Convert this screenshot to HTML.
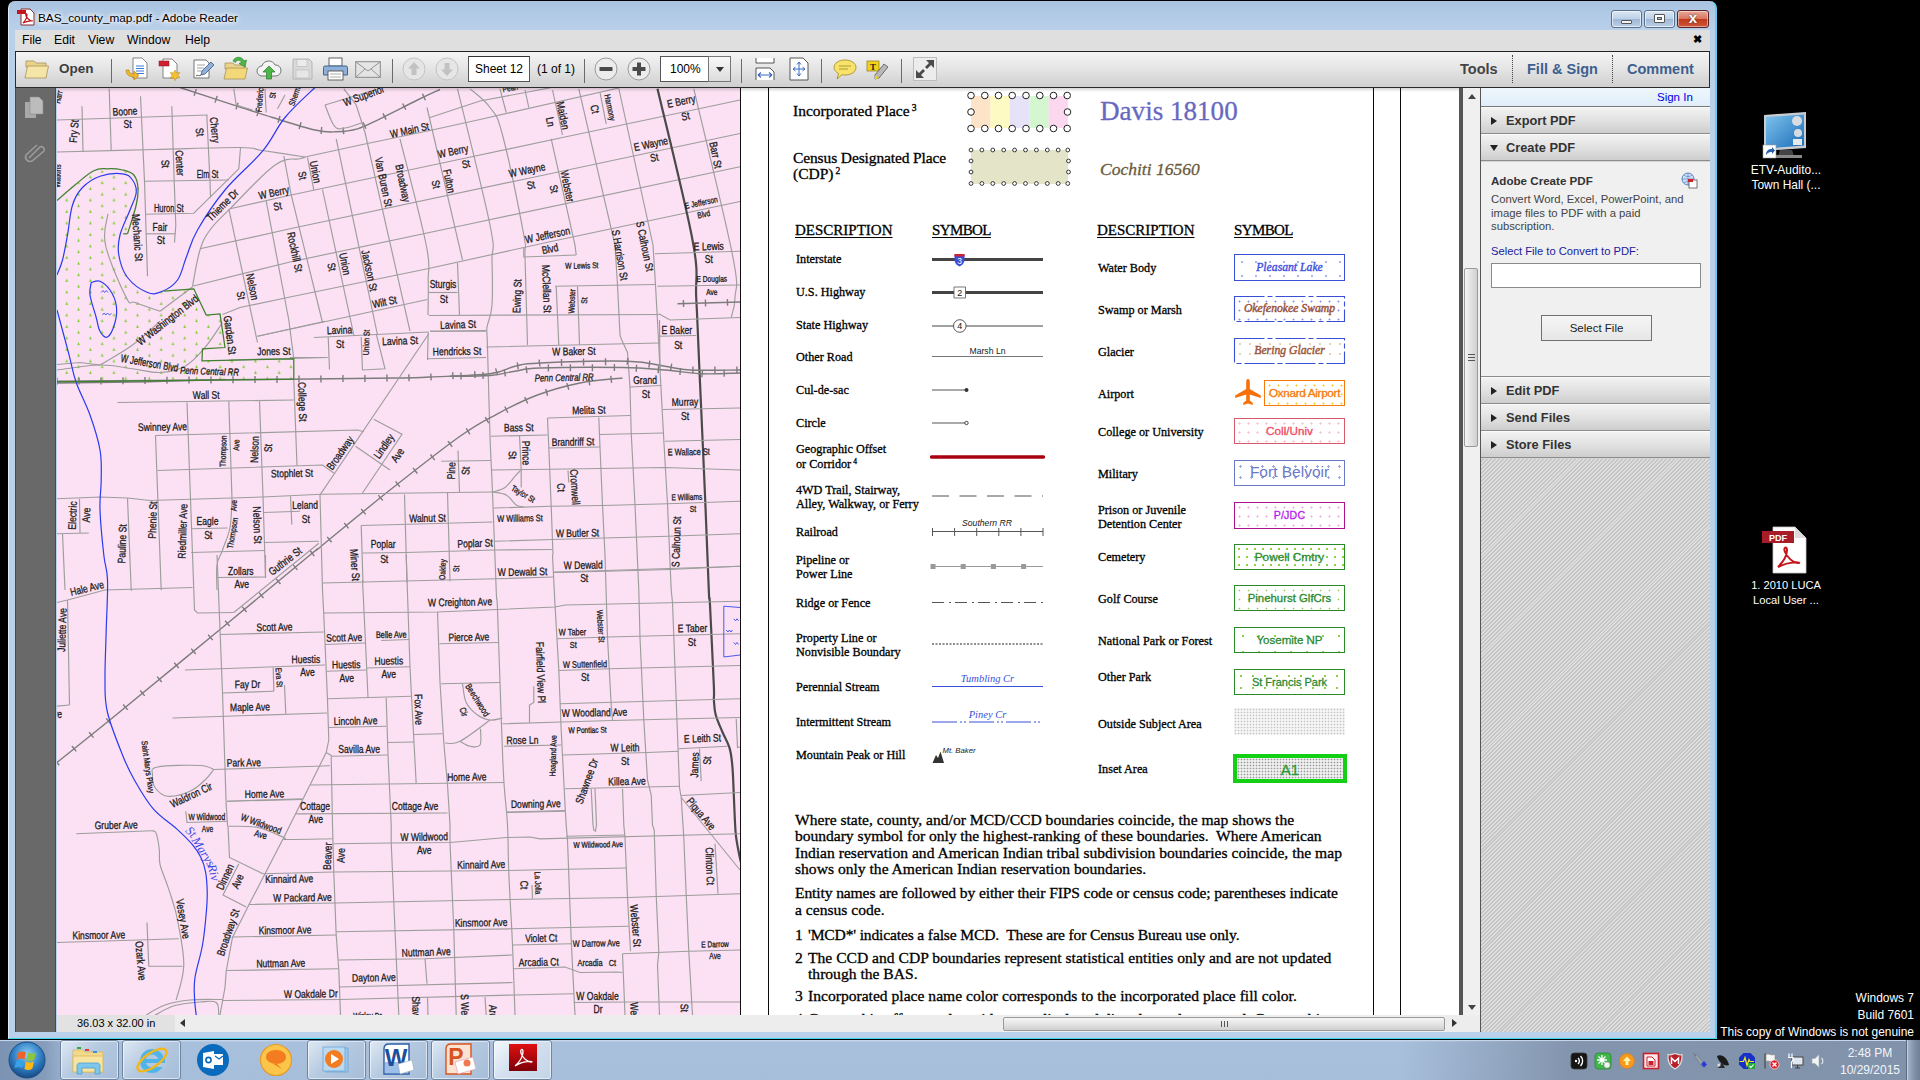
<!DOCTYPE html>
<html lang="en">
<head>
<meta charset="utf-8">
<title>BAS_county_map.pdf - Adobe Reader</title>
<style>
*{box-sizing:border-box;margin:0;padding:0}
html,body{width:1920px;height:1080px;overflow:hidden;background:#000;font-family:"Liberation Sans",sans-serif;}
.abs{position:absolute}
#win{position:absolute;left:8px;top:1px;width:1709px;height:1038px;border-radius:7px 7px 0 0;background:linear-gradient(#a9c3e1 0,#b9d0ea 28px,#b9d1ea 100%);border-left:1px solid #dfeaf6;border-right:2px solid #5fd0f0;border-bottom:1px solid #3fd6f0;}
#title{position:absolute;left:37px;top:10px;font-size:11.8px;text-shadow:0 0 6px #fff,0 0 6px #fff,0 0 4px #fff;color:#000;letter-spacing:0px;white-space:nowrap}
#menubar{position:absolute;left:15px;top:30px;width:1695px;height:21px;background:#dfdfdf}
#menubar span{position:absolute;top:3px;font-size:12.2px;color:#000}
#toolbar{position:absolute;left:15px;top:51px;width:1695px;height:37px;border:1px solid #2b2b2b;border-top:1px solid #222;background:linear-gradient(#f4f4f4,#e4e4e4 50%,#cfcfcf);}
.tsep{position:absolute;top:7px;width:1px;height:24px;background:#6a6a6a}
.tb{position:absolute;font-weight:bold;color:#3e3e3e;font-size:14.5px}
#leftpane{position:absolute;left:15px;top:88px;width:41px;height:944px;background:#696969;border-left:1px solid #4a4a4a;border-right:1px solid #4a4a4a}
#doc{position:absolute;left:57px;top:88px;width:1402px;height:927px;background:#fff;overflow:hidden}
#hbar{position:absolute;left:57px;top:1015px;width:1423px;height:17px;background:#ededed}
#vbar{position:absolute;left:1459px;top:88px;width:21px;height:927px;background:#f0f0f0;border-left:4px solid #555}
#panel{position:absolute;left:1480px;top:88px;width:230px;height:944px;border-left:1px solid #555;background:#d4d4d4}
.ph{position:absolute;left:0;width:229px;height:27px;background:linear-gradient(#f2f2f2,#dedede 60%,#cdcdcd);border-top:1px solid #fafafa;border-bottom:1px solid #8c8c8c;font-weight:bold;font-size:12.8px;color:#333;padding:5px 0 0 25px}
.ph i{position:absolute;left:10px;top:9px;width:0;height:0;border:4px solid transparent;border-left:6px solid #222;border-right:0}
.ph i.dn{left:9px;top:10px;border:4px solid transparent;border-top:6px solid #222;border-bottom:0}
#taskbar{position:absolute;left:0;top:1039px;width:1920px;height:41px;background:linear-gradient(#05070a 0,#05070a 1px,#c6d7ea 1px,#c2d4e8 2px,#a8c0dc 3px,#a7bedb 100%);}
.tbtn{position:absolute;top:1px;height:40px;width:59px;border:1px solid #6f86a3;border-radius:3px;background:linear-gradient(135deg,#dfe9f4,#b5c9e0 45%,#a7bdd8);box-shadow:inset 0 0 0 1px rgba(255,255,255,.55)}
.dtxt{position:absolute;color:#fff;font-size:11.95px;white-space:nowrap}
</style>
</head>
<body>
<div id="win">
 <svg class="abs" style="left:7px;top:7px" width="20" height="18" viewBox="0 0 20 18"><path d="M5 1h9l4 4v12H5z" fill="#fff" stroke="#8a2a2a" stroke-width="1"/><rect x="1" y="2" width="9" height="4" fill="#c4161c"/><path d="M7 15c3-3 4-6 4-8s-2-1-1 1 4 5 6 5-3-1-9 2z" fill="none" stroke="#c4161c" stroke-width="1.2"/></svg>
 <div id="title" style="left:29px">BAS_county_map.pdf - Adobe Reader</div>
 <div class="abs" style="left:1602px;top:9px;width:31px;height:18px;border:1px solid #5a6f8a;border-radius:3px;background:linear-gradient(#dbe7f5,#bdd1e8 48%,#9fb8d6 52%,#bcd0e7);box-shadow:inset 0 0 0 1px rgba(255,255,255,.6)"><div class="abs" style="left:9px;top:9px;width:11px;height:4px;background:#f4f4f4;border:1px solid #555;border-radius:1px"></div></div>
 <div class="abs" style="left:1635px;top:9px;width:31px;height:18px;border:1px solid #5a6f8a;border-radius:3px;background:linear-gradient(#dbe7f5,#bdd1e8 48%,#9fb8d6 52%,#bcd0e7);box-shadow:inset 0 0 0 1px rgba(255,255,255,.6)"><div class="abs" style="left:9px;top:3px;width:11px;height:9px;background:#fff;border:1px solid #555;border-radius:1px"><div style="margin:2px 0 0 2px;width:5px;height:3px;border:1px solid #555;background:#a9bdd6"></div></div></div>
 <div class="abs" style="left:1668px;top:9px;width:32px;height:18px;border:1px solid #5b2226;border-radius:3px;background:linear-gradient(#e9a99a,#d9775f 48%,#c2391d 52%,#d0573a);box-shadow:inset 0 0 0 1px rgba(255,255,255,.45);color:#fff;font-weight:bold;font-size:15px;line-height:14px;text-align:center;text-shadow:0 0 2px #333">x</div>
</div>
<div id="menubar">
 <span style="left:7px">File</span><span style="left:39px">Edit</span><span style="left:73px">View</span><span style="left:112px">Window</span><span style="left:170px">Help</span>
 <span style="left:1678px;top:3px;font-weight:bold;font-size:11px">&#x2716;</span>
</div>
<div id="toolbar">
<svg class="abs" style="left:8px;top:5px" width="26" height="24" viewBox="0 0 26 24"><path d="M2 4h8l2 2h10v4H2z" fill="#e9d38a" stroke="#a8935a" stroke-width=".8"/><path d="M1 21 3.500 9h21L22 21z" fill="#f5e6a8" stroke="#a8935a" stroke-width=".8"/></svg>
<div class="tb" style="left:43px;top:9px;font-size:13.5px">Open</div>
<div class="tsep" style="left:95px"></div>
<svg class="abs" style="left:109px;top:5px" width="24" height="24" viewBox="0 0 24 24"><path d="M8 1h9l5 5v15H8z" fill="#fff" stroke="#777" stroke-width=".9"/><path d="M11 9h8M11 11.500h8M11 14h8M11 16.500h8" stroke="#3a7ad8" stroke-width="1"/><path d="M1 13c0 5 4 7 8 7v3l5-4.500-5-4.500v3c-3 0-5-1-5-4z" fill="#f0b82c" stroke="#a87a1a" stroke-width=".6"/></svg>
<svg class="abs" style="left:142px;top:5px" width="24" height="24" viewBox="0 0 24 24"><path d="M5 2h9l5 5v14H5z" fill="#fff" stroke="#777" stroke-width=".9"/><rect x="1" y="4" width="10" height="5" fill="#d02030" stroke="#8a1420" stroke-width=".5"/><path d="M17 13l1.500 3 3.300-.5-1.800 2.800 1.800 2.800-3.300-.4-1.500 3-1.500-3-3.300.4 1.800-2.800-1.800-2.800 3.300.5z" fill="#f2c230" stroke="#b8861a" stroke-width=".5"/></svg>
<svg class="abs" style="left:175px;top:5px" width="24" height="24" viewBox="0 0 24 24"><path d="M3 3h12l3 3v15H3z" fill="#fff" stroke="#666" stroke-width=".9"/><path d="M6 8h8M6 11h7M6 14h5" stroke="#999" stroke-width=".9"/><path d="M10 18l1-4 9-9 3 3-9 9z" fill="#8fb0d8" stroke="#3a5a8a" stroke-width=".8"/><path d="M5 19c2-2 3 1 5-1" stroke="#333" stroke-width=".8" fill="none"/></svg>
<svg class="abs" style="left:207px;top:3px" width="27" height="26" viewBox="0 0 27 26"><path d="M2 8h8l2 2h10v4H2z" fill="#e9d38a" stroke="#a8935a" stroke-width=".8"/><path d="M1 24 3.500 13h21L22 24z" fill="#f2d878" stroke="#a8935a" stroke-width=".8"/><path d="M10 6c2-5 9-5 11 0l2.500-1-1.500 7-6-3.500 2.500-1c-1-3-5-3-6 0z" fill="#4cb648" stroke="#2a7a28" stroke-width=".6"/></svg>
<svg class="abs" style="left:240px;top:6px" width="26" height="23" viewBox="0 0 26 23"><path d="M6 18a5 5 0 0 1 0-10 7 7 0 0 1 13-1 5.500 5.500 0 0 1 1 11z" fill="#f4f4f4" stroke="#777" stroke-width="1"/><path d="M13 8l6 6h-3.500v7h-5v-7H7z" fill="#4cb648" stroke="#2a7a28" stroke-width=".7"/></svg>
<svg class="abs" style="left:276px;top:6px" width="21" height="22" viewBox="0 0 21 22"><path d="M1 1h16l3 3v17H1z" fill="#d9d9d9" stroke="#b0b0b0" stroke-width=".9"/><rect x="5" y="1.500" width="10" height="7" fill="#ececec" stroke="#b8b8b8" stroke-width=".6"/><rect x="4" y="12" width="13" height="8" fill="#e6e6e6" stroke="#b8b8b8" stroke-width=".6"/></svg>
<svg class="abs" style="left:307px;top:5px" width="25" height="24" viewBox="0 0 25 24"><rect x="6" y="1" width="13" height="8" fill="#fff" stroke="#555" stroke-width=".9"/><path d="M2 9h21a1.500 1.500 0 0 1 1.500 1.500V18H.500v-7.500A1.500 1.500 0 0 1 2 9z" fill="#8fb0d8" stroke="#3a5a8a" stroke-width=".9"/><rect x="5" y="14" width="15" height="9" fill="#fff" stroke="#555" stroke-width=".9"/><path d="M7 17h11M7 20h11" stroke="#999" stroke-width=".8"/></svg>
<svg class="abs" style="left:339px;top:9px" width="26" height="17" viewBox="0 0 26 17"><rect x=".7" y=".7" width="24.600" height="15.600" fill="#e4e4e4" stroke="#8a8a8a" stroke-width="1"/><path d="M1 1l12 9 12-9M1 16l9-8M25 16l-9-8" fill="none" stroke="#8a8a8a" stroke-width=".9"/></svg>
<div class="tsep" style="left:376px"></div>
<svg class="abs" style="left:386px;top:5px" width="24" height="24" viewBox="0 0 24 24"><circle cx="12" cy="12" r="11" fill="#e6e6e6" stroke="#c4c4c4" stroke-width="1"/><path d="M12 5l6 6.500h-3.500V18h-5v-6.500H6z" fill="#c2c2c2" transform="rotate(0 12 12)"/></svg>
<svg class="abs" style="left:419px;top:5px" width="24" height="24" viewBox="0 0 24 24"><circle cx="12" cy="12" r="11" fill="#e6e6e6" stroke="#c4c4c4" stroke-width="1"/><path d="M12 5l6 6.500h-3.500V18h-5v-6.500H6z" fill="#c2c2c2" transform="rotate(180 12 12)"/></svg>
<div class="abs" style="left:452px;top:4px;width:62px;height:26px;background:#fff;border:1px solid #555;border-top-color:#333;font-size:12px;line-height:24px;text-align:center;white-space:nowrap">Sheet 12</div>
<div class="abs" style="left:521px;top:10px;font-size:12px;white-space:nowrap">(1 of 1)</div>
<div class="tsep" style="left:568px"></div>
<svg class="abs" style="left:578px;top:5px" width="24" height="24" viewBox="0 0 24 24"><circle cx="12" cy="12" r="11" fill="#ececec" stroke="#9a9a9a" stroke-width="1"/><rect x="5.500" y="10" width="13" height="4" rx=".5" fill="#4a4a4a"/></svg>
<svg class="abs" style="left:611px;top:5px" width="24" height="24" viewBox="0 0 24 24"><circle cx="12" cy="12" r="11" fill="#ececec" stroke="#9a9a9a" stroke-width="1"/><rect x="5.500" y="10" width="13" height="4" rx=".5" fill="#4a4a4a"/><rect x="10" y="5.500" width="4" height="13" rx=".5" fill="#4a4a4a"/></svg>
<div class="abs" style="left:644px;top:4px;width:71px;height:26px;background:#fff;border:1px solid #555;font-size:12px;line-height:24px;padding-left:9px">100%<div class="abs" style="left:47px;top:-1px;width:23px;height:26px;border:1px solid #777;background:linear-gradient(#f8f8f8,#dcdcdc)"><div style="margin:10px 0 0 7px;width:0;height:0;border:4px solid transparent;border-top:5px solid #333"></div></div></div>
<div class="tsep" style="left:725px"></div>
<svg class="abs" style="left:738px;top:5px" width="22" height="24" viewBox="0 0 22 24"><path d="M2 1v5h18V1" fill="#fff" stroke="#555" stroke-width="1"/><path d="M2 23V11h14l4 4v8" fill="#fff" stroke="#555" stroke-width="1"/><path d="M4 18h14M4 18l3-2.500M4 18l3 2.500M18 18l-3-2.500M18 18l-3 2.500" stroke="#3a6ac0" stroke-width="1.100" fill="none"/></svg>
<svg class="abs" style="left:772px;top:5px" width="22" height="24" viewBox="0 0 22 24"><path d="M2 1h13l5 5v17H2z" fill="#fff" stroke="#555" stroke-width="1"/><path d="M11 5v14M5 12h12M11 5l-2 2.500M11 5l2 2.500M11 19l-2-2.500M11 19l2-2.500M5 12l2.500-2M5 12l2.500 2M17 12l-2.500-2M17 12l-2.500 2" stroke="#3a6ac0" stroke-width="1" fill="none"/></svg>
<div class="tsep" style="left:805px"></div>
<svg class="abs" style="left:817px;top:7px" width="24" height="22" viewBox="0 0 24 22"><path d="M12 1c6 0 11 3 11 7.500S18 16 12 16c-1 0-2 0-3-.3L4 20l1.500-5.500C3 13 1 11 1 8.500 1 4 6 1 12 1z" fill="#f7e26a" stroke="#a8922a" stroke-width=".9"/><path d="M6 7h12M6 10h9" stroke="#a8922a" stroke-width=".9"/></svg>
<svg class="abs" style="left:850px;top:6px" width="25" height="23" viewBox="0 0 25 23"><rect x="1" y="3" width="12" height="10" fill="#f2d21a" stroke="#8a7a1a" stroke-width=".7"/><text x="7" y="11.500" font-family="Liberation Serif, serif" font-weight="bold" font-size="9" text-anchor="middle" fill="#222">T</text><path d="M9 17l9-11 4 3-9 11-4 1z" fill="#b8b8b8" stroke="#555" stroke-width=".8"/><path d="M9 17l4 3-4 1.500z" fill="#f2d21a"/></svg>
<div class="tsep" style="left:885px"></div>
<svg class="abs" style="left:897px;top:5px" width="24" height="24" viewBox="0 0 24 24"><rect x=".5" y=".5" width="23" height="23" fill="#ececec" stroke="#bdbdbd"/><path d="M21 3v8l-3-3-4 4-2-2 4-4-3-3zM3 21v-8l3 3 4-4 2 2-4 4 3 3z" fill="#4a4a4a"/></svg>
<div class="tb" style="left:1444px;top:9px;font-size:14.5px;color:#444">Tools</div>
<div class="abs" style="left:1496px;top:3px;width:0;height:28px;border-left:1px dotted #444"></div>
<div class="tb" style="left:1511px;top:9px;font-size:14.5px;color:#3c5f8e">Fill &amp; Sign</div>
<div class="abs" style="left:1596px;top:3px;width:0;height:28px;border-left:1px dotted #444"></div>
<div class="tb" style="left:1611px;top:9px;font-size:14.5px;color:#3c5f8e">Comment</div>
</div>
<div id="leftpane">
 <svg class="abs" style="left:8px;top:8px" width="22" height="24" viewBox="0 0 22 24"><path d="M1 6h11v16H1z" fill="#a9a9a9"/><path d="M6 1h9l4 4v13H6z" fill="#bcbcbc" stroke="#8c8c8c" stroke-width=".6"/></svg>
 <svg class="abs" style="left:7px;top:54px" width="24" height="24" viewBox="0 0 24 24"><path d="M6 18 17 7a3 3 0 0 1 4 4L9 21a4.5 4.5 0 0 1-6-6L14 5" fill="none" stroke="#9a9a9a" stroke-width="1.6" transform="translate(0,-2)"/></svg>
</div>
<div id="doc">
<svg id="mp" class="abs" style="left:0;top:0" width="684" height="927" viewBox="57 88 684 927" font-family="Liberation Sans, sans-serif">
<defs><pattern id="pk" x="88.900" y="197.600" width="23.600" height="11.500" patternUnits="userSpaceOnUse"><path d="M1.400 0.400l1.400 3.500h-2.600z" fill="#7fcc30"/><path d="M13.200 6.150l1.400 3.500h-2.600z" fill="#7fcc30"/></pattern></defs>
<style>#mp .s{fill:none;stroke:#9d9d9d;stroke-width:1.15}#mp .rr{fill:none;stroke:#7c7c7c;stroke-width:1.4}#mp .rv{fill:none;stroke:#2a3af0;stroke-width:1.2}#mp .gb{fill:none;stroke:#3f7f2f;stroke-width:1.25}#mp .hw{fill:none;stroke:#4a4a4a;stroke-width:2.2}#mp .wb{fill:none;stroke:#4a5af0;stroke-width:1}#mp text{fill:#1a1a1a;stroke:#1a1a1a;stroke-width:.3}</style>
<rect x="57" y="88" width="684" height="927" fill="#fbe1f3"/>
<path d="M57 200.5 L93.8 170.8 L122.5 170 L133.8 175 L138 187.5 L136.2 205 L127.5 233.8 L120 235 L118.8 255 L127.5 277.5 L147.5 292.5 L163.8 291.2 L193.8 288.8 L206.2 315 L220 313.8 L225 347.5 L202.5 348.8 L202 360.8 L293.8 358.8 L293.8 379.2 L57 381.8Z" fill="url(#pk)"/>
<path class="s" d="M305 157 L362.5 144.5 L365 144 L428.8 130.8 L480 119.5 L618.8 88"/>
<path class="s" d="M430 117.5 L480 101 L550.5 87.8"/>
<path class="s" d="M230 208.8 L290 195.2 L460 159.2 L562.5 137.5 L682.5 112.2 L740 100"/>
<path class="s" d="M200 248.8 L290 228.8 L528.8 178.2 L652.5 152 L740 133.5"/>
<path class="s" d="M192.5 286.2 L290 262 L462.5 225.5 L740 166.8"/>
<path class="s" d="M222.5 314.5 L240 307.5 L290 297 L427.5 268.8 L548.8 242 L740 201.5"/>
<path class="s" d="M257.5 336.2 L427.5 299.5"/>
<path class="s" d="M57 152C74.6 151.6 122.1 150.3 155 149.5C187.9 148.7 220.7 147.3 240 147.5C259.4 147.7 250.8 148.8 262.5 150.5C274.2 152.2 297.4 155.8 305 157"/>
<path class="s" d="M57 120 L207.5 115"/>
<path class="s" d="M82 106.2 L83 151.5"/>
<path class="s" d="M109.2 88.8 L111.2 150.5"/>
<path class="s" d="M140.5 96.2 L144.5 181.2 L147.5 276.2"/>
<path class="s" d="M171.8 106.2 L174.2 181.2 L175.8 225 L174.5 242.5"/>
<path class="s" d="M206.8 115 L210 181.2 L210.5 197.5"/>
<path class="s" d="M144.5 181.2 L228.8 180"/>
<path class="s" d="M145 214.2 L193.8 213.2 L238.8 168.8 L240.5 148"/>
<path class="s" d="M145.8 233.8 L175 233.8"/>
<path class="s" d="M192.5 286.2C193.8 279.7 196.8 260.1 200 250C203.2 239.9 204.6 237.4 210 230C215.4 222.6 218.3 220.4 230 208.8C241.7 197.1 262.4 174 275 165C287.6 156 294.6 160.2 300 158.8C305.4 157.3 304.1 157.3 305 157"/>
<path class="s" d="M108 213.8C107.5 219.4 102.2 229.9 105.5 245C108.8 260.1 120.9 287.1 126.2 297.5C131.6 307.9 128.9 300 135 302.5C141.1 305 155.5 309.7 160 311.2"/>
<path class="s" d="M100 365C105.8 361.4 121.7 352.9 132.5 345C143.3 337.1 155.1 325.5 160 321.2"/>
<path class="s" d="M160 311.2 L192.5 287"/>
<path class="s" d="M57 370C64.7 369.1 86.4 365.2 100 365C113.6 364.8 121.7 367.4 132.5 368.8C143.3 370.1 150.6 372.9 160 372.5C169.4 372.1 176.9 370.8 185 366.2C193.1 361.8 198.2 355.4 205 347.5C211.8 339.6 219.3 327 222.5 322.5"/>
<path class="s" d="M57 364.5 L80 362.5 L100 365"/>
<path class="rr" d="M180 87.5C189 90.4 213.3 98.3 230 103.8C246.7 109.2 257.2 112.8 272.5 117.5C287.8 122.2 303.5 127.4 315 130C326.5 132.6 328.6 132 336.2 131.8C343.9 131.5 349.6 131.1 357.5 128.8C365.4 126.4 369.2 123.9 380 118.8C390.8 113.6 406.7 105.3 417.5 100C428.3 94.7 435.9 91.4 440 89.5"/>
<path class="rr" d="M194.1 95.8L196.3 89.1M215.1 102.6L217.2 95.9M236 109.4L238.1 102.7M256.9 116.1L259.1 109.5M278 122.8L280 116M299.1 129L301.1 122.3M321.1 134L321.7 127M343.8 134.2L342.8 127.3M365.9 128.8L363.1 122.4M386.1 119.6L383 113.4M405.8 109.8L402.6 103.5M425.4 100.2L422.5 93.8"/>
<path class="s" d="M325 105 L372.5 90.5"/>
<path class="s" d="M325 105C326.7 108.8 330.9 122.1 334.5 126.2C338.1 130.4 340 128.7 345 128C350 127.3 359.4 123.5 362.5 122.5"/>
<path class="s" d="M233.8 88.8 L236.2 105 L252.5 110"/>
<path class="s" d="M265 88.8 L266.2 112.5"/>
<path class="s" d="M285 95 L277.5 108.8"/>
<path class="s" d="M307.5 157.5 L313.8 190"/>
<path class="s" d="M228.8 208.8 L257.5 342.5"/>
<path class="s" d="M266.2 201.2 L288.8 320"/>
<path class="s" d="M283.8 156.2 L291.2 195 L322.5 322.5"/>
<path class="s" d="M322.5 189.5 L353.8 335"/>
<path class="s" d="M336.2 138.8 L377.5 335"/>
<path class="s" d="M343.8 88.8 L356.2 105 L365 132.5 L410 331.2"/>
<path class="s" d="M400 138.8C404.7 157.9 421.2 219.6 426.2 245C431.3 270.4 427.9 267.4 428.2 280C428.6 292.6 428 308.7 428 315"/>
<path class="s" d="M427 107.5 L462.5 260"/>
<path class="s" d="M457.5 88.8C463.4 113.3 483.8 194.2 490 225C496.2 255.8 491.6 245.6 492 260C492.4 274.4 492.8 293.3 492 305C491.2 316.7 488.4 320.5 487.5 325C486.6 329.5 486.8 325.9 486.8 330C486.8 334.1 486.9 328.4 487.5 347.5C488.1 366.6 489.1 410.1 490 436.2C490.9 462.4 491.4 464.8 492.5 492.5C493.6 520.2 495.4 568.9 496.2 590C497.1 611.1 496.6 587 497.5 610C498.4 633 500.1 686.9 501.2 717.5C502.4 748.1 502.6 760.6 503.8 780C504.9 799.4 506.6 808.4 507.5 825C508.4 841.6 507.9 850.9 508.8 872.5C509.6 894.1 511.4 919.4 512.5 945C513.6 970.6 514.5 1002.4 515 1015"/>
<path class="s" d="M470 88.8C473.6 92.1 484.1 99.2 490 107.5C495.9 115.8 496.4 112 502.5 135C508.6 157.9 519.7 212.9 523.8 235C527.8 257.1 524.3 237.7 525 257.5C525.7 277.3 527 329.2 527.5 345"/>
<path class="s" d="M551.2 138.8 L575 245 L576.2 255"/>
<path class="s" d="M552.5 90 L562.5 135"/>
<path class="s" d="M600 92.5 L606.2 123.8"/>
<path class="s" d="M500 88.8 L506.2 112.5"/>
<path class="s" d="M525 90 L528.8 107.5"/>
<path class="s" d="M578.8 88.8 L615 245 L617.5 285 L620 335 L621.2 338.8 L627.5 352.5 L630 387.5 L631.2 432.5 L635 505 L638.8 590 L640 637.5 L643.8 720 L647.5 780 L651.2 795 L652.5 825 L654.2 830 L656.2 895 L658.8 952.5 L657.5 965 L659.5 1015"/>
<path class="s" d="M618.8 88.5 L653 245 L655.5 285 L658.8 345 L660 370 L663.8 440 L667.5 503.8 L671.2 590 L672.5 602.5 L676.2 700 L679.5 787.5 L681.2 797.5 L683.8 837.5 L686.2 895 L688.8 951.2 L692.5 1015"/>
<path class="hw" d="M657.5 88.8C663.8 116 685.5 202.4 692.5 240C699.5 277.6 695.1 276.8 696.2 297.5C697.4 318.2 698.1 339.7 698.8 355C699.4 370.3 698.9 357.3 700 382.5C701.1 407.7 703.4 457.6 705 495C706.6 532.4 707.9 570.2 708.8 590C709.6 609.8 709.1 587.9 710 605C710.9 622.1 713 667.9 713.8 685C714.5 702.1 713.5 694.6 713.9 700C714.3 705.4 714.2 709.1 715.7 714.8C717.2 720.5 719.7 725.5 722.2 731.5C724.7 737.5 727.8 741.8 729.6 748.1C731.4 754.4 731.7 758.7 732.4 766.7C733.1 774.7 733.3 783.3 733.7 792.6C734.1 801.9 734.4 810.5 734.8 818.5C735.2 826.5 735.2 830 736.1 837C737 844 738.8 852.5 739.8 857.4C740.8 862.3 741.2 862.8 741.5 864"/>
<path class="s" d="M693.8 88.8C700.7 118.7 725.1 217.4 732.5 255C739.9 292.6 735.2 286.2 735 297.5C734.8 308.8 731.9 313.9 731.2 317.5"/>
<path class="s" d="M523.8 247.5 L523.8 257 L576.2 255"/>
<path class="s" d="M555 286.2 L655 284.5"/>
<path class="s" d="M556.2 286.2 L558.8 345"/>
<path class="s" d="M577.5 286.2 L579.5 345"/>
<path class="s" d="M428.8 315.5 L658.8 314.5"/>
<path class="s" d="M430 331.2 L486.2 331.2"/>
<path class="s" d="M428.8 292.5 L457.5 292.5"/>
<path class="s" d="M457.5 263 L459.5 315"/>
<path class="s" d="M655 253.8 L740 251.2"/>
<path class="s" d="M657.5 286.2 L740 285"/>
<path class="rr" d="M677.5 303.8 L740 302"/>
<path class="rr" d="M683.6 307.1L683.4 300.1M705.6 306.5L705.4 299.5M727.6 305.8L727.4 298.9"/>
<path class="s" d="M658.8 313.8 L670 320 L740 317.5"/>
<path class="rr" d="M57 381.2C98.9 380.9 228.3 379.8 290 379.2C351.7 378.7 374.8 378.4 400 378C425.2 377.6 413.8 377.8 430 377C446.2 376.2 474.7 375.7 490 373.8C505.3 371.8 506 368.2 515 366.2C524 364.3 519.8 363.9 540 363C560.2 362.1 605 360.7 627.5 361.2C650 361.8 653.8 364.7 665 366.2C676.2 367.8 676.5 369.3 690 370C703.5 370.7 731 370 740 370"/>
<path class="rr" d="M57 384.7L57 377.8M79 384.6L79 377.6M101 384.4L101 377.4M123 384.2L123 377.2M145 384L145 377M167 383.8L167 376.8M189 383.6L189 376.6M211 383.4L211 376.4M233 383.2L233 376.2M255 383.1L255 376.1M277 382.9L277 375.9M299 382.6L299 375.6M321 382.4L320.9 375.4M343 382.1L342.9 375.1M365 381.9L364.9 374.9M387 381.6L386.9 374.6M409.1 381.2L408.9 374.2M431.2 380.4L430.8 373.5M453.1 379.3L452.7 372.3M475.1 378.1L474.7 371.1M497.6 375.1L495.6 368.4M518.2 369.4L517.3 362.4M540 366.5L539.1 359.6M561.6 366.1L561.5 359.1M583.6 365.6L583.5 358.6M605.6 365.2L605.5 358.2M627.1 364.7L628 357.8M648.9 367.6L649.8 360.7M670.6 370.6L671.7 363.7M692.9 373.5L692.9 366.5M714.9 373.5L714.9 366.5M736.9 373.5L736.9 366.5"/>
<path class="rr" d="M57 383C73.7 382.8 119.8 382.4 150 381.8C180.2 381.1 211.5 379.9 225 379.5"/>
<path class="rr" d="M450 376.2C457.2 376.1 478.3 376.4 490 375.5C501.7 374.6 506 372.6 515 371.2C524 369.9 520.6 368.7 540 368C559.4 367.3 600 367.1 622.5 367.5C645 367.9 650.6 368.9 665 370C679.4 371.1 689 373.2 702.5 373.8C716 374.3 733.2 373.1 740 373"/>
<path class="rr" d="M461.1 379.5L460.9 372.5M483.1 379.1L482.9 372.1M505.4 376.4L504.2 369.5M527 373.2L526.1 366.3M548.4 371.4L548.4 364.4M570.4 371.3L570.4 364.3M592.4 371.2L592.4 364.2M614.4 371L614.4 364M636.2 371.8L636.6 364.8M658.2 373.1L658.6 366.1M679.9 375L680.6 368M701.8 377.2L702.5 370.2M724.2 376.8L724.1 369.8"/>
<path class="rr" d="M57 762.5C67.9 753.7 88.2 737.7 117.5 713.8C146.8 689.8 185.3 658.1 220 629.5C254.7 600.9 291.8 570 310 555C328.2 540 306.9 558 321.2 546.2C335.6 534.5 365 509.8 390 490C415 470.2 440.6 450 460 436.2C479.4 422.5 483.6 421.2 497.5 413.8C511.4 406.3 522.6 400.5 537.5 395C552.4 389.5 564.7 386.1 580 383C595.3 379.9 614.9 378.9 622.5 378"/>
<path class="rr" d="M59.2 765.2L54.8 759.8M76.3 751.4L71.9 746M93.5 737.6L89.1 732.2M110.6 723.8L106.2 718.4M127.7 709.9L123.2 704.5M144.7 695.9L140.2 690.5M161.7 682L157.2 676.6M178.7 668L174.2 662.6M195.7 654L191.2 648.6M212.7 640.1L208.2 634.7M229.6 626.1L225.2 620.7M246.6 612L242.1 606.6M263.5 598L259.1 592.6M280.5 584L276 578.6M297.4 569.9L293 564.6M314.3 556.1L310.1 550.5M331.6 542.3L327.2 536.9M348.6 528.4L344.2 522.9M365.7 514.4L361.2 509M382.7 500.5L378.3 495.1M399.8 486.9L395.6 481.3M417.3 473.5L413 467.9M434.7 460.1L430.5 454.5M452.2 446.7L447.9 441.1M469.9 434.4L466.3 428.4M488.8 423.1L485.2 417.1M507.8 412.8L504.8 406.5M527.7 403.5L524.7 397.1M547.6 395.8L545.7 389M568.8 389.8L566.9 383.1M589.7 385.4L588.9 378.4M611.6 382.8L610.8 375.9"/>
<path class="s" d="M233.8 612.5 L318.8 543.2"/>
<path class="s" d="M117.5 402.5 L293.8 400"/>
<path class="s" d="M293.8 380 L297 465.5"/>
<path class="s" d="M228.8 360 L327.5 357.5"/>
<path class="s" d="M226.2 320 L228.8 353.8"/>
<path class="s" d="M155.5 435.5 L357.5 430 L363.8 431.8"/>
<path class="s" d="M155.5 435.5 L161.2 590 L161.8 588.2"/>
<path class="s" d="M187 402.5 L193.8 590 L194.5 610 L197.5 613 L233.8 612.5"/>
<path class="s" d="M228.8 401.2 L232 498.8"/>
<path class="s" d="M259.5 401.2 L263 496.2 L265.5 577.5"/>
<path class="s" d="M157.5 470.5 L322.5 465 L333.8 473"/>
<path class="s" d="M428.8 333.8 L320 495 L322.5 590 L323.8 615 L327.5 700 L328.8 740 L326.2 752.5 L310 785 L290 825 L283.8 837.5 L248.8 905 L232.5 937.5 L226.2 971.2 L225 987.5 L220 1015"/>
<path class="s" d="M373.8 419.2 L402 434.2 L362 493.8"/>
<path class="s" d="M355.5 446.2 L390 470"/>
<path class="s" d="M57 498.8 L100 497 L127.5 498 L150 500.5 L262.5 497 L321.2 494.2 L492.5 492"/>
<path class="s" d="M79.5 498.8 L80 533"/>
<path class="s" d="M57 533.8 L88.8 533"/>
<path class="s" d="M62.5 533.8 L65 590"/>
<path class="s" d="M127.5 498 L131.2 590 L130.5 589.5"/>
<path class="s" d="M191.2 528.8 L227.5 528"/>
<path class="s" d="M232 498.8C231.6 503.9 231.7 518.3 230 527.5C228.3 536.7 224.8 543.2 222.5 550C220.2 556.8 218 557.8 217 565C216 572.2 217 585.5 217 590"/>
<path class="s" d="M191.2 552.5 L265 550.5"/>
<path class="s" d="M217 555 L220 630 L222.5 692.5 L226.2 805 L227.5 825 L228 826.2 L229.5 857.5 L263 873.8"/>
<path class="s" d="M217 577.5 L265.5 577"/>
<path class="s" d="M265.5 555 L265.5 578"/>
<path class="s" d="M263.8 512.5 L300 511.2"/>
<path class="s" d="M290.5 496.2 L291.8 524.5"/>
<path class="s" d="M265 542.5 L318.8 541.2"/>
<path class="s" d="M361.2 525.5 L492.5 522"/>
<path class="s" d="M361.2 525.5 L363 582.5"/>
<path class="s" d="M404.5 494.5 L407 582.5"/>
<path class="s" d="M447.5 492.5 L450 581.2"/>
<path class="s" d="M362.5 553 L406.2 552.5 L495 550 L552.5 549.5"/>
<path class="s" d="M458 450.5 L459.5 492"/>
<path class="s" d="M441.2 461.2 L490.8 460.5"/>
<path class="s" d="M427.5 358.8 L486.2 357.5"/>
<path class="s" d="M428.2 332.5 L427.5 360"/>
<path class="s" d="M313.8 337.5 L428.8 332"/>
<path class="s" d="M430 331.2 L486.2 330.5"/>
<path class="s" d="M328.2 337 L329.5 369.5"/>
<path class="s" d="M361.2 337 L362.5 370 L385 368.8 L376.2 333.8"/>
<path class="s" d="M290 357.5 L327.5 357.5"/>
<path class="s" d="M257.5 336.2 L325 321.2"/>
<path class="s" d="M288.8 320 L293.8 358.8"/>
<path class="s" d="M486.2 347 L625 343.8 L660 343"/>
<path class="s" d="M659.5 336.2 L696.2 335.5"/>
<path class="s" d="M659.5 320 L660 370"/>
<path class="s" d="M630 387 L661.2 385.5"/>
<path class="s" d="M662.5 409.5 L740 408"/>
<path class="s" d="M547.5 418 L630 415.5"/>
<path class="s" d="M547.5 418 L548.8 447.5 L551.2 506.2 L553 555"/>
<path class="s" d="M598.8 417.5 L600 447.5 L602.5 505 L605 555"/>
<path class="s" d="M548.8 448 L600 447"/>
<path class="s" d="M600 434.5 L663.8 433"/>
<path class="s" d="M490.8 436.2 L547.5 435"/>
<path class="s" d="M519.5 435.5 L521.2 470 L521.2 487.5"/>
<path class="s" d="M491.2 470 L550 469.2 L665 467.5 L740 470"/>
<path class="s" d="M665 441.2 L740 439.5"/>
<path class="s" d="M493 492C495.2 491.2 501 490.3 505 487.5C509 484.7 512.2 479.3 515 476.2C517.8 473.2 519.5 471.5 520.5 470.5"/>
<path class="s" d="M493 492C495.4 492.5 502.1 492.7 506.2 495C510.4 497.3 513.1 502.8 516.2 505C519.4 507.2 522.4 506.6 523.8 507"/>
<path class="s" d="M568 470.5 L568.8 482.5"/>
<path class="s" d="M493.8 508 L551.2 506.2 L602.5 505.5 L667.5 503.8 L740 501.2"/>
<path class="s" d="M495 541.2 L552.5 539.5 L603.8 538 L668.8 536.2 L740 533.8"/>
<path class="s" d="M322.5 583 L496.2 578.8 L553.8 577"/>
<path class="s" d="M553.8 572.5 L606.2 571.2 L670 569.5 L740 566.2"/>
<path class="s" d="M57 602.5 L67.5 600 L105 590 L192.5 587.5"/>
<path class="s" d="M67.5 600 L69.5 705"/>
<path class="s" d="M57 706.2 L69.5 705"/>
<path class="s" d="M220 634.5 L323.8 632"/>
<path class="s" d="M185 670 L325 665"/>
<path class="s" d="M222.5 693 L273.8 691.2"/>
<path class="s" d="M273.2 667.5 L273.8 691.2"/>
<path class="s" d="M284.5 685 L285.8 713.8"/>
<path class="s" d="M172.5 718 L327 713"/>
<path class="s" d="M213.8 769.5 L330 765.8"/>
<path class="s" d="M213.8 769.5C211.3 768.8 210.1 766 200 765.5C189.9 765 166.1 765.3 157.5 767C148.9 768.7 152.9 771.3 152.5 775C152.1 778.7 152.3 783.7 155 787.5C157.7 791.3 161.2 795.6 167.5 796.2C173.8 796.9 183.2 794.2 190 791.2C196.8 788.3 200.7 783.9 205 780C209.3 776.1 212.2 771.4 213.8 769.5"/>
<path class="s" d="M227.5 801.2 L302.5 798.8"/>
<path class="s" d="M326.2 752.5 L332.5 756.2 L387.5 755"/>
<path class="s" d="M331.2 756.2 L332.5 825 L333.8 872.5 L336.2 935 L338.8 970 L340.5 1015"/>
<path class="s" d="M328 698.8 L411.2 696.2"/>
<path class="s" d="M328.8 727.5 L386.2 726.2"/>
<path class="s" d="M386.2 698 L388 755 L391.2 825 L391.2 842.5 L395 930 L398.8 1015"/>
<path class="s" d="M310 785 L503.8 782.5"/>
<path class="s" d="M296.2 813.8 L447.5 813"/>
<path class="s" d="M362.5 580 L365.5 642.5 L368 697.5"/>
<path class="s" d="M325 644.5 L365.5 643"/>
<path class="s" d="M381.2 640.5 L409.2 639.5"/>
<path class="s" d="M326.2 671.2 L366.2 670"/>
<path class="s" d="M367 668 L410 666.8"/>
<path class="s" d="M406.2 555 L410 667.5 L412.5 715 L416.2 783.8"/>
<path class="s" d="M387.5 742.5 L413.8 742"/>
<path class="s" d="M413.8 734.5 L442.5 733.8"/>
<path class="s" d="M437.5 612 L440 682.5 L443.8 742.5 L447.5 785 L450 825 L450 842.5 L453.8 930 L456.2 1015"/>
<path class="s" d="M323.8 613 L437.5 612 L497.5 609.5 L555 607 L565 605 L740 601.2"/>
<path class="s" d="M439.5 643.8 L498.8 642.5"/>
<path class="s" d="M441.2 683.8 L500 682.5"/>
<path class="s" d="M462.5 683.8C463.2 687.1 463.6 696.9 466.2 702.5C468.9 708.1 473.2 711.9 477.5 715C481.8 718.1 485.5 719.5 490 720C494.5 720.5 500.2 718.4 502.5 718"/>
<path class="s" d="M490 720C484.6 723.8 468.1 737.1 460 741.2C451.9 745.4 447.7 742.7 445 743"/>
<path class="s" d="M460 741.2C461.8 742.1 466.4 745.6 470 746.2C473.6 746.9 478.1 748.1 480 745C481.9 741.9 480.4 731.7 480.5 728.8"/>
<path class="s" d="M552.5 555 L555 605 L558.8 670 L561.2 730 L565 805 L566.2 825 L567.5 840 L571.2 940 L575 1015"/>
<path class="s" d="M605 555 L607.5 637.5 L611.2 705 L612.5 720"/>
<path class="s" d="M553.8 572 L606.2 570.5 L740 566.2"/>
<path class="s" d="M557 638.8 L607.5 637 L740 633.8"/>
<path class="s" d="M558.8 670.5 L610 668.8 L740 665.5"/>
<path class="s" d="M560 703.8 L740 698.8"/>
<path class="s" d="M502.5 723.8 L561.2 722 L612.5 720.5 L717.5 718 L740 717.5"/>
<path class="s" d="M562.5 755 L647.5 752.5 L678.8 751.2"/>
<path class="s" d="M678.8 748.8 L727.5 746.2"/>
<path class="s" d="M565 788.8 L680 786.2"/>
<path class="s" d="M503.8 746.2 L561.2 745"/>
<path class="s" d="M506.2 812 L565 810.5"/>
<path class="s" d="M591.2 788.8 L593 825"/>
<path class="s" d="M595 788.8 L596.5 825"/>
<path class="s" d="M699.5 748.8 L701.2 781.2"/>
<path class="s" d="M736.2 718.8 L737.5 747.5 L740 747"/>
<path class="s" d="M533.8 686.2 L533.8 702.5 L529.5 705 L529.5 722.5"/>
<path class="wb" d="M723.8 606.2 L740 607.5"/>
<path class="wb" d="M723.8 606.2 L723.8 657 L740 655"/>
<path class="wb" d="M726.2 630 L728 632 L729.5 630 L731 632 L732.5 630"/>
<path class="wb" d="M733.8 618.8 L735.5 620.8 L737 618.8 L738.5 620.8"/>
<path class="wb" d="M733.8 642.5 L735.5 644.5 L737 642.5 L738.5 644.5"/>
<path class="s" d="M76.2 833.8 L152 830.7"/>
<path class="s" d="M152 830.7C152.6 830.9 154.5 830.7 155.5 832C156.5 833.3 156.8 834.6 157.5 838C158.2 841.4 159 846.2 159.4 851C159.8 855.8 158.7 858.6 160 864.4C161.3 870.2 164.5 876.9 166.7 883.3C168.9 889.7 170.3 893.4 172.2 900C174.1 906.6 175.4 908.3 177.5 920C179.6 931.7 184 950.6 183.8 965C183.5 979.4 177.6 993.7 176.2 1000"/>
<path class="s" d="M57 942.5 L178.8 938.8"/>
<path class="s" d="M147 922.5 L148.8 966.2 L182.5 966.2"/>
<path class="s" d="M146.2 1015C149.6 1013.2 157.1 1007.7 165 1005C172.9 1002.3 179.7 1001 190 1000C200.3 999 216.7 999.6 222.5 999.5"/>
<path class="s" d="M155 1015C158.6 1013.3 166.9 1007.8 175 1005.5C183.1 1003.2 192.6 1002.5 200 1002C207.4 1001.5 212.9 1000.2 216.2 1002.5C219.6 1004.8 218.3 1012.8 218.8 1015"/>
<path class="s" d="M238.8 863.8 L223 895 L246.2 907"/>
<path class="s" d="M185.8 811.2 L187 822.5 L227 821.2"/>
<path class="s" d="M228.8 826.2C233.9 826.5 247.6 825.5 257.5 827.5C267.4 829.5 278.4 835.3 283.8 837.5C289.1 839.7 278.7 839.3 287.5 839.5C296.3 839.7 324.4 838.9 332.5 838.8"/>
<path class="s" d="M227 801.2 L302 799.5"/>
<path class="s" d="M263 873.8 L333.8 872 L508.8 870.5 L626.2 868"/>
<path class="s" d="M248.8 904.5 L335 903 L510 899.5 L627.5 897.5 L740 893.8"/>
<path class="s" d="M232.5 937 L336.2 935"/>
<path class="s" d="M336.2 931.8 L511.2 928.8 L628.8 926.2"/>
<path class="s" d="M227 970.5 L338 968.8"/>
<path class="s" d="M338.8 960 L425 958.8 L512.5 955"/>
<path class="s" d="M339.5 987 L512.5 982.5"/>
<path class="s" d="M222.5 1000.5 L340 999.5 L515 995 L573.8 993.8"/>
<path class="s" d="M573.8 1002.5 L625 1002 L740 1002"/>
<path class="s" d="M333.8 843.8 L391.2 843 L450 842.5 L506.2 837.5 L530 837 L540 838.8 L740 833.8"/>
<path class="s" d="M566.2 836.2 L625 835"/>
<path class="s" d="M622.5 788.8 L623.8 825 L625 837.5 L627.5 897.5 L630.5 951.2"/>
<path class="s" d="M622.5 953.8 L625 1015"/>
<path class="s" d="M512.5 945 L571.2 943.8"/>
<path class="s" d="M622.5 953.8 L688.8 951.2 L740 950"/>
<path class="s" d="M513.8 968.8 L565 967 L580 972.5 L617.5 972 L622.5 972.5"/>
<path class="s" d="M506.2 812.5 L565 811.2"/>
<path class="s" d="M532 885 L532.5 898.8"/>
<path class="s" d="M593 825 L593.8 830 L595.5 831.2 L596.5 825"/>
<path class="s" d="M681.2 797.5 L740 870"/>
<path class="s" d="M715 843.8 L718 893.8"/>
<path class="s" d="M681.2 795.5 L740 792.5"/>
<path class="s" d="M425 958.8 L427 983.8"/>
<path class="s" d="M427.5 997.5 L428 1015"/>
<path class="s" d="M485 997 L486.2 1015"/>
<path class="rv" d="M315 87.5C309.6 92.9 294.4 106 285 117.5C275.6 129 273.3 138.2 262.5 151.2C251.7 164.3 236.7 175.8 225 190C213.3 204.2 204.5 217.8 197.5 230C190.5 242.2 189.8 248.5 186.2 257.5C182.7 266.5 181.8 273.9 177.5 280C173.2 286.1 167.9 289 162.5 291.2C157.1 293.5 153.8 295 147.5 292.5C141.2 290 132.7 284.2 127.5 277.5C122.3 270.8 120.1 262.6 118.8 255C117.4 247.3 118 243.1 120 235C122 226.9 127.1 217.7 130 210C132.9 202.3 135.8 197.9 136.2 192.5C136.7 187.1 135 183.4 132.5 180C130 176.6 128.3 174.4 122.5 173.8C116.7 173.1 107.2 173.8 100 176.2C92.8 178.7 87.5 182.3 82.5 187.5C77.5 192.7 75.2 196.4 72.5 205C69.8 213.6 69.3 225.1 67.5 235C65.7 244.9 64.4 252.8 62.5 260C60.6 267.2 58 272.3 57 275"/>
<path class="rv" d="M57 310C59.1 317.9 65.3 340.7 68.8 353.8C72.2 366.8 72.4 371.5 76.2 382.5C80.1 393.5 85.7 402.9 90 415C94.3 427.1 98 438.3 100 450C102 461.7 101.2 469.2 101.2 480C101.2 490.8 99.5 496.5 100 510C100.5 523.5 102.4 542.4 103.8 555C105.1 567.6 107 566.5 107.5 580C108 593.5 106.7 612 106.2 630C105.8 648 104.8 665.1 105 680C105.2 694.9 104.3 699 107.5 712.5C110.7 726 117.7 742.9 122.5 755C127.3 767.1 128.9 770.3 134.4 780C139.9 789.7 145.7 800.1 153.3 808.9C160.9 817.7 169.7 822.5 176.7 828.9C183.7 835.3 187.8 839.2 192.2 844.4C196.6 849.6 198.7 852.8 201.1 857.8C203.5 862.8 204.5 866.2 205.6 872.2C206.7 878.2 207 884.2 207.2 891C207.4 897.8 207.3 900.3 206.5 910C205.7 919.7 204.6 932.9 202.5 945C200.4 957.1 196.4 968 195 977.5C193.6 987 194.3 990.8 194.5 997.5C194.7 1004.2 195.9 1011.9 196.2 1015"/>
<path class="rv" d="M91.2 282.5C92.8 282.3 96.6 279.9 100 281.2C103.4 282.6 107.1 285.7 110 290C112.9 294.3 115.3 299.1 116.2 305C117.2 310.9 116.6 316.7 115 322.5C113.4 328.3 110.2 335.4 107.5 337C104.8 338.6 102 334.8 100 331.2C98 327.7 98 324 96.2 317.5C94.5 311 90.9 301.3 90 295C89.1 288.7 91 284.8 91.2 282.5"/>
<path class="wb" d="M101.2 292.5 L103 290.5 L104.5 292.5 L106.2 290.5 L108 292.5"/>
<path class="wb" d="M102.5 315 L104.2 313 L105.8 315 L107.5 313 L109.5 315 L111.5 313.5"/>
<path class="gb" d="M57 200.5C60.2 197.7 68.4 190.4 75 185C81.6 179.6 87.9 173.7 93.8 170.8C99.6 167.8 102.3 168.9 107.5 168.8C112.7 168.6 117.8 168.9 122.5 170C127.2 171.1 131 171.8 133.8 175C136.5 178.2 137.6 182.1 138 187.5C138.4 192.9 138.1 196.7 136.2 205C134.4 213.3 129.1 228.6 127.5 233.8"/>
<path class="gb" d="M127.5 233.8 L123.2 233.8"/>
<path class="gb" d="M163.8 291.2 L193.8 288.8 L206.2 315 L220 313.8 L225 347.5 L202.5 348.8 L202 360.8 L293.8 358.8 L293.8 379.2 L57 381.8"/>
<text transform="translate(73.8 131.2) rotate(-85) scale(0.780 1)" font-size="11" text-anchor="middle" dy=".35em" >Fry St</text>
<text transform="translate(125 111.2) rotate(-3) scale(0.780 1)" font-size="11" text-anchor="middle" dy=".35em" >Boone</text>
<text transform="translate(127.5 124.5) scale(0.780 1)" font-size="11" text-anchor="middle" dy=".35em" >St</text>
<text transform="translate(200 132) rotate(82) scale(0.780 1)" font-size="11" text-anchor="middle" dy=".35em" >St</text>
<text transform="translate(215 130) rotate(84) scale(0.780 1)" font-size="11" text-anchor="middle" dy=".35em" >Cherry</text>
<text transform="translate(165.5 163.8) rotate(84) scale(0.780 1)" font-size="11" text-anchor="middle" dy=".35em" >St</text>
<text transform="translate(180 163) rotate(86) scale(0.780 1)" font-size="11" text-anchor="middle" dy=".35em" >Center</text>
<text transform="translate(160 226.8) scale(0.780 1)" font-size="11" text-anchor="middle" dy=".35em" >Fair</text>
<text transform="translate(160.8 240.5) scale(0.780 1)" font-size="11" text-anchor="middle" dy=".35em" >St</text>
<text transform="translate(137.5 237.5) rotate(86) scale(0.780 1)" font-size="11" text-anchor="middle" dy=".35em" >Mechanic St</text>
<text transform="translate(222.5 205) rotate(-45) scale(0.780 1)" font-size="11" text-anchor="middle" dy=".35em" >Thieme Dr</text>
<text transform="translate(273.8 192.5) rotate(-12) scale(0.780 1)" font-size="11" text-anchor="middle" dy=".35em" >W Berry</text>
<text transform="translate(277.5 206.2) rotate(-12) scale(0.780 1)" font-size="11" text-anchor="middle" dy=".35em" >St</text>
<text transform="translate(302.5 175.5) rotate(78) scale(0.780 1)" font-size="11" text-anchor="middle" dy=".35em" >St</text>
<text transform="translate(315.5 171.8) rotate(78) scale(0.780 1)" font-size="11" text-anchor="middle" dy=".35em" >Union</text>
<text transform="translate(409.5 130) rotate(-12) scale(0.780 1)" font-size="11" text-anchor="middle" dy=".35em" >W Main St</text>
<text transform="translate(363.8 95.5) rotate(-20) scale(0.780 1)" font-size="11" text-anchor="middle" dy=".35em" >W Superior</text>
<text transform="translate(383.8 182) rotate(78) scale(0.780 1)" font-size="11" text-anchor="middle" dy=".35em" >Van Buren St</text>
<text transform="translate(403 183.2) rotate(78) scale(0.780 1)" font-size="11" text-anchor="middle" dy=".35em" >Broadway</text>
<text transform="translate(453 151.2) rotate(-12) scale(0.780 1)" font-size="11" text-anchor="middle" dy=".35em" >W Berry</text>
<text transform="translate(465.8 163.8) rotate(-12) scale(0.780 1)" font-size="11" text-anchor="middle" dy=".35em" >St</text>
<text transform="translate(436.2 184.2) rotate(78) scale(0.780 1)" font-size="11" text-anchor="middle" dy=".35em" >St</text>
<text transform="translate(449.2 181.2) rotate(78) scale(0.780 1)" font-size="11" text-anchor="middle" dy=".35em" >Fulton</text>
<text transform="translate(295 252) rotate(78) scale(0.780 1)" font-size="11" text-anchor="middle" dy=".35em" >Rockhill St</text>
<text transform="translate(331.8 266.8) rotate(78) scale(0.780 1)" font-size="11" text-anchor="middle" dy=".35em" >St</text>
<text transform="translate(345 263.8) rotate(78) scale(0.780 1)" font-size="11" text-anchor="middle" dy=".35em" >Union</text>
<text transform="translate(369.5 270.5) rotate(78) scale(0.780 1)" font-size="11" text-anchor="middle" dy=".35em" >Jackson St</text>
<text transform="translate(252.5 286.8) rotate(78) scale(0.780 1)" font-size="11" text-anchor="middle" dy=".35em" >Nelson</text>
<text transform="translate(241.2 295.5) rotate(78) scale(0.780 1)" font-size="11" text-anchor="middle" dy=".35em" >St</text>
<text transform="translate(384.5 302) rotate(-12) scale(0.780 1)" font-size="11" text-anchor="middle" dy=".35em" >Wilt St</text>
<text transform="translate(443 283.8) scale(0.780 1)" font-size="11" text-anchor="middle" dy=".35em" >Sturgis</text>
<text transform="translate(443.8 299.2) scale(0.780 1)" font-size="11" text-anchor="middle" dy=".35em" >St</text>
<text transform="translate(458 324.5) rotate(-2) scale(0.780 1)" font-size="11" text-anchor="middle" dy=".35em" >Lavina St</text>
<text transform="translate(339.5 330) rotate(-2) scale(0.780 1)" font-size="11" text-anchor="middle" dy=".35em" >Lavina</text>
<text transform="translate(340 343.8) scale(0.780 1)" font-size="11" text-anchor="middle" dy=".35em" >St</text>
<text transform="translate(400 340.8) rotate(-2) scale(0.780 1)" font-size="11" text-anchor="middle" dy=".35em" >Lavina St</text>
<text transform="translate(457 351.2) rotate(-1) scale(0.780 1)" font-size="11" text-anchor="middle" dy=".35em" >Hendricks St</text>
<text transform="translate(273.8 351.2) rotate(-1) scale(0.780 1)" font-size="11" text-anchor="middle" dy=".35em" >Jones St</text>
<text transform="translate(230 335) rotate(82) scale(0.780 1)" font-size="11" text-anchor="middle" dy=".35em" >Garden St</text>
<text transform="translate(167.5 320) rotate(-38) scale(0.780 1)" font-size="11" text-anchor="middle" dy=".35em" >W Washington Blvd</text>
<text transform="translate(207.5 173.8) scale(0.671 1)" font-size="11" text-anchor="middle" dy=".35em" >Elm St</text>
<text transform="translate(168.8 208) scale(0.686 1)" font-size="11" text-anchor="middle" dy=".35em" >Huron St</text>
<text transform="translate(259.5 100) rotate(-85) scale(0.780 1)" font-size="8.5" text-anchor="middle" dy=".35em" >Frederic</text>
<text transform="translate(272.5 95.5) rotate(-85) scale(0.780 1)" font-size="8.5" text-anchor="middle" dy=".35em" >St</text>
<text transform="translate(294.5 96.2) rotate(-70) scale(0.780 1)" font-size="8.5" text-anchor="middle" dy=".35em" >Sherm</text>
<text transform="translate(366.2 342.5) rotate(-88) scale(0.780 1)" font-size="8.5" text-anchor="middle" dy=".35em" >Union St</text>
<text transform="translate(527 170) rotate(-12) scale(0.780 1)" font-size="11" text-anchor="middle" dy=".35em" >W Wayne</text>
<text transform="translate(530.8 185) rotate(-12) scale(0.780 1)" font-size="11" text-anchor="middle" dy=".35em" >St</text>
<text transform="translate(567.5 186.2) rotate(78) scale(0.780 1)" font-size="11" text-anchor="middle" dy=".35em" >Webster</text>
<text transform="translate(554.2 188.8) rotate(78) scale(0.780 1)" font-size="11" text-anchor="middle" dy=".35em" >St</text>
<text transform="translate(563 115.5) rotate(78) scale(0.780 1)" font-size="11" text-anchor="middle" dy=".35em" >Maiden</text>
<text transform="translate(550.5 121.8) rotate(78) scale(0.780 1)" font-size="11" text-anchor="middle" dy=".35em" >Ln</text>
<text transform="translate(595 109.2) rotate(78) scale(0.780 1)" font-size="11" text-anchor="middle" dy=".35em" >Ct</text>
<text transform="translate(681.2 101.2) rotate(-12) scale(0.780 1)" font-size="11" text-anchor="middle" dy=".35em" >E Berry</text>
<text transform="translate(685.5 116.2) rotate(-12) scale(0.780 1)" font-size="11" text-anchor="middle" dy=".35em" >St</text>
<text transform="translate(650.8 143.8) rotate(-12) scale(0.780 1)" font-size="11" text-anchor="middle" dy=".35em" >E Wayne</text>
<text transform="translate(654.2 157.5) rotate(-12) scale(0.780 1)" font-size="11" text-anchor="middle" dy=".35em" >St</text>
<text transform="translate(715.8 155) rotate(78) scale(0.780 1)" font-size="11" text-anchor="middle" dy=".35em" >Barr St</text>
<text transform="translate(547.5 235) rotate(-12) scale(0.780 1)" font-size="11" text-anchor="middle" dy=".35em" >W Jefferson</text>
<text transform="translate(550 248.8) rotate(-12) scale(0.780 1)" font-size="11" text-anchor="middle" dy=".35em" >Blvd</text>
<text transform="translate(620 255) rotate(80) scale(0.780 1)" font-size="11" text-anchor="middle" dy=".35em" >S Harrison St</text>
<text transform="translate(645 246.2) rotate(78) scale(0.780 1)" font-size="11" text-anchor="middle" dy=".35em" >S Calhoun St</text>
<text transform="translate(708.8 246.2) rotate(-1) scale(0.780 1)" font-size="11" text-anchor="middle" dy=".35em" >E Lewis</text>
<text transform="translate(708.8 259.2) scale(0.780 1)" font-size="11" text-anchor="middle" dy=".35em" >St</text>
<text transform="translate(546.8 288.8) rotate(88) scale(0.780 1)" font-size="11" text-anchor="middle" dy=".35em" >McClellan St</text>
<text transform="translate(517 296.2) rotate(-88) scale(0.780 1)" font-size="11" text-anchor="middle" dy=".35em" >Ewing St</text>
<text transform="translate(676.8 330.5) scale(0.780 1)" font-size="11" text-anchor="middle" dy=".35em" >E Baker</text>
<text transform="translate(678.2 345) scale(0.780 1)" font-size="11" text-anchor="middle" dy=".35em" >St</text>
<text transform="translate(573.8 351.2) rotate(-1) scale(0.780 1)" font-size="11" text-anchor="middle" dy=".35em" >W Baker St</text>
<text transform="translate(610 107.5) rotate(78) scale(0.780 1)" font-size="8.5" text-anchor="middle" dy=".35em" >Harmony</text>
<text transform="translate(701.2 202.5) rotate(-12) scale(0.780 1)" font-size="8.5" text-anchor="middle" dy=".35em" >E Jefferson</text>
<text transform="translate(703.8 214.2) rotate(-12) scale(0.780 1)" font-size="8.5" text-anchor="middle" dy=".35em" >Blvd</text>
<text transform="translate(581.8 265.5) rotate(-1) scale(0.780 1)" font-size="8.5" text-anchor="middle" dy=".35em" >W Lewis St</text>
<text transform="translate(571.8 301.2) rotate(-88) scale(0.780 1)" font-size="8.5" text-anchor="middle" dy=".35em" >Webster</text>
<text transform="translate(584.2 300.5) rotate(-88) scale(0.780 1)" font-size="8.5" text-anchor="middle" dy=".35em" >St</text>
<text transform="translate(711.8 278.8) rotate(-1) scale(0.780 1)" font-size="8.5" text-anchor="middle" dy=".35em" >E Douglas</text>
<text transform="translate(711.8 292) rotate(-1) scale(0.780 1)" font-size="8.5" text-anchor="middle" dy=".35em" >Ave</text>
<text transform="translate(510 88) rotate(-10) scale(0.780 1)" font-size="8.5" text-anchor="middle" dy=".35em" >Pearl</text>
<text transform="translate(206.2 395) rotate(-1) scale(0.780 1)" font-size="11" text-anchor="middle" dy=".35em" >Wall St</text>
<text transform="translate(302.5 401.8) rotate(88) scale(0.780 1)" font-size="11" text-anchor="middle" dy=".35em" >College St</text>
<text transform="translate(162.5 426.8) rotate(-1) scale(0.780 1)" font-size="11" text-anchor="middle" dy=".35em" >Swinney Ave</text>
<text transform="translate(254.5 449.5) rotate(-88) scale(0.780 1)" font-size="11" text-anchor="middle" dy=".35em" >Nelson</text>
<text transform="translate(268 448) rotate(-88) scale(0.780 1)" font-size="11" text-anchor="middle" dy=".35em" >St</text>
<text transform="translate(292 473.2) rotate(-1) scale(0.780 1)" font-size="11" text-anchor="middle" dy=".35em" >Stophlet St</text>
<text transform="translate(340 453) rotate(-55) scale(0.780 1)" font-size="11" text-anchor="middle" dy=".35em" >Broadway</text>
<text transform="translate(383.8 446.2) rotate(-55) scale(0.780 1)" font-size="11" text-anchor="middle" dy=".35em" >Lindley</text>
<text transform="translate(397.5 455) rotate(-55) scale(0.780 1)" font-size="11" text-anchor="middle" dy=".35em" >Ave</text>
<text transform="translate(72.5 515.5) rotate(-88) scale(0.780 1)" font-size="11" text-anchor="middle" dy=".35em" >Electric</text>
<text transform="translate(86.2 515) rotate(-88) scale(0.780 1)" font-size="11" text-anchor="middle" dy=".35em" >Ave</text>
<text transform="translate(122 543.8) rotate(-88) scale(0.780 1)" font-size="11" text-anchor="middle" dy=".35em" >Pauline St</text>
<text transform="translate(152.5 520) rotate(-88) scale(0.780 1)" font-size="11" text-anchor="middle" dy=".35em" >Phenie St</text>
<text transform="translate(182.5 531.2) rotate(-88) scale(0.780 1)" font-size="11" text-anchor="middle" dy=".35em" >Riedmiller Ave</text>
<text transform="translate(207.5 520.8) scale(0.780 1)" font-size="11" text-anchor="middle" dy=".35em" >Eagle</text>
<text transform="translate(208.2 535.5) scale(0.780 1)" font-size="11" text-anchor="middle" dy=".35em" >St</text>
<text transform="translate(257.5 525) rotate(88) scale(0.780 1)" font-size="11" text-anchor="middle" dy=".35em" >Nelson St</text>
<text transform="translate(305 505) rotate(-1) scale(0.780 1)" font-size="11" text-anchor="middle" dy=".35em" >Leland</text>
<text transform="translate(305.8 518.8) scale(0.780 1)" font-size="11" text-anchor="middle" dy=".35em" >St</text>
<text transform="translate(285 561.2) rotate(-38) scale(0.780 1)" font-size="11" text-anchor="middle" dy=".35em" >Guthrie St</text>
<text transform="translate(240.8 571.2) scale(0.780 1)" font-size="11" text-anchor="middle" dy=".35em" >Zollars</text>
<text transform="translate(241.8 584.5) scale(0.780 1)" font-size="11" text-anchor="middle" dy=".35em" >Ave</text>
<text transform="translate(355 565) rotate(86) scale(0.780 1)" font-size="11" text-anchor="middle" dy=".35em" >Miner St</text>
<text transform="translate(383.2 543.8) scale(0.780 1)" font-size="11" text-anchor="middle" dy=".35em" >Poplar</text>
<text transform="translate(384.2 558.8) scale(0.780 1)" font-size="11" text-anchor="middle" dy=".35em" >St</text>
<text transform="translate(427.5 518) rotate(-1) scale(0.780 1)" font-size="11" text-anchor="middle" dy=".35em" >Walnut St</text>
<text transform="translate(475 543.2) rotate(-2) scale(0.780 1)" font-size="11" text-anchor="middle" dy=".35em" >Poplar St</text>
<text transform="translate(451.2 470.8) rotate(-88) scale(0.780 1)" font-size="11" text-anchor="middle" dy=".35em" >Pine</text>
<text transform="translate(465.5 470.8) rotate(-88) scale(0.780 1)" font-size="11" text-anchor="middle" dy=".35em" >St</text>
<text transform="translate(149.5 363) rotate(10) scale(0.702 1)" font-size="11" text-anchor="middle" dy=".35em" >W Jefferson Blvd</text>
<text transform="translate(209.5 371.2) rotate(2) scale(0.780 1)" font-size="10" text-anchor="middle" dy=".35em" font-style="italic">Penn Central RR</text>
<text transform="translate(223 451.2) rotate(-88) scale(0.780 1)" font-size="8.5" text-anchor="middle" dy=".35em" >Thompson</text>
<text transform="translate(236.2 445) rotate(-88) scale(0.780 1)" font-size="8.5" text-anchor="middle" dy=".35em" >Ave</text>
<text transform="translate(233.8 505.5) rotate(-88) scale(0.780 1)" font-size="8.5" text-anchor="middle" dy=".35em" >Ave</text>
<text transform="translate(232.5 533) rotate(-80) scale(0.780 1)" font-size="8.5" text-anchor="middle" dy=".35em" >Thompson</text>
<text transform="translate(442.5 569.5) rotate(-88) scale(0.780 1)" font-size="8.5" text-anchor="middle" dy=".35em" >Oakley</text>
<text transform="translate(456.2 568.8) rotate(-88) scale(0.780 1)" font-size="8.5" text-anchor="middle" dy=".35em" >St</text>
<text transform="translate(645 380) rotate(-1) scale(0.780 1)" font-size="11" text-anchor="middle" dy=".35em" >Grand</text>
<text transform="translate(645.8 393.8) scale(0.780 1)" font-size="11" text-anchor="middle" dy=".35em" >St</text>
<text transform="translate(685 401.8) rotate(-1) scale(0.780 1)" font-size="11" text-anchor="middle" dy=".35em" >Murray</text>
<text transform="translate(685 416.2) scale(0.780 1)" font-size="11" text-anchor="middle" dy=".35em" >St</text>
<text transform="translate(588.8 410) rotate(-1) scale(0.780 1)" font-size="11" text-anchor="middle" dy=".35em" >Melita St</text>
<text transform="translate(518.8 427.5) rotate(-1) scale(0.780 1)" font-size="11" text-anchor="middle" dy=".35em" >Bass St</text>
<text transform="translate(573 441.8) rotate(-1) scale(0.780 1)" font-size="11" text-anchor="middle" dy=".35em" >Brandriff St</text>
<text transform="translate(512.5 455) rotate(86) scale(0.780 1)" font-size="11" text-anchor="middle" dy=".35em" >St</text>
<text transform="translate(526.2 453) rotate(88) scale(0.780 1)" font-size="11" text-anchor="middle" dy=".35em" >Prince</text>
<text transform="translate(575 487) rotate(86) scale(0.780 1)" font-size="11" text-anchor="middle" dy=".35em" >Cromwell</text>
<text transform="translate(561.2 487.5) rotate(86) scale(0.780 1)" font-size="11" text-anchor="middle" dy=".35em" >Ct</text>
<text transform="translate(577.5 533) rotate(-1) scale(0.780 1)" font-size="11" text-anchor="middle" dy=".35em" >W Butler St</text>
<text transform="translate(522.5 571.8) rotate(-1) scale(0.780 1)" font-size="11" text-anchor="middle" dy=".35em" >W Dewald St</text>
<text transform="translate(583.2 565) rotate(-1) scale(0.780 1)" font-size="11" text-anchor="middle" dy=".35em" >W Dewald</text>
<text transform="translate(584.2 578.2) scale(0.780 1)" font-size="11" text-anchor="middle" dy=".35em" >St</text>
<text transform="translate(676.2 541.8) rotate(-88) scale(0.780 1)" font-size="11" text-anchor="middle" dy=".35em" >S Calhoun St</text>
<text transform="translate(564.2 377.5) rotate(-1) scale(0.780 1)" font-size="10" text-anchor="middle" dy=".35em" font-style="italic">Penn Central RR</text>
<text transform="translate(688.8 451.8) rotate(-1) scale(0.780 1)" font-size="9.5" text-anchor="middle" dy=".35em" >E Wallace St</text>
<text transform="translate(523.2 493.8) rotate(30) scale(0.780 1)" font-size="8.5" text-anchor="middle" dy=".35em" >Taylor St</text>
<text transform="translate(686.8 497) rotate(-1) scale(0.780 1)" font-size="8.5" text-anchor="middle" dy=".35em" >E Williams</text>
<text transform="translate(693 509.2) scale(0.780 1)" font-size="8.5" text-anchor="middle" dy=".35em" >St</text>
<text transform="translate(520 518.2) rotate(-1) scale(0.780 1)" font-size="9.5" text-anchor="middle" dy=".35em" >W Williams St</text>
<text transform="translate(87 588.2) rotate(-14) scale(0.780 1)" font-size="11" text-anchor="middle" dy=".35em" >Hale Ave</text>
<text transform="translate(62 630) rotate(-88) scale(0.780 1)" font-size="11" text-anchor="middle" dy=".35em" >Juliette Ave</text>
<text transform="translate(274.5 627) rotate(-1) scale(0.780 1)" font-size="11" text-anchor="middle" dy=".35em" >Scott Ave</text>
<text transform="translate(344.2 637.5) rotate(-1) scale(0.780 1)" font-size="11" text-anchor="middle" dy=".35em" >Scott Ave</text>
<text transform="translate(305.8 659.2) rotate(-1) scale(0.780 1)" font-size="11" text-anchor="middle" dy=".35em" >Huestis</text>
<text transform="translate(307.5 672.5) scale(0.780 1)" font-size="11" text-anchor="middle" dy=".35em" >Ave</text>
<text transform="translate(346.2 664.5) rotate(-1) scale(0.780 1)" font-size="11" text-anchor="middle" dy=".35em" >Huestis</text>
<text transform="translate(346.8 678.2) scale(0.780 1)" font-size="11" text-anchor="middle" dy=".35em" >Ave</text>
<text transform="translate(388.8 660.8) rotate(-1) scale(0.780 1)" font-size="11" text-anchor="middle" dy=".35em" >Huestis</text>
<text transform="translate(388.8 674.5) scale(0.780 1)" font-size="11" text-anchor="middle" dy=".35em" >Ave</text>
<text transform="translate(247.5 684.2) rotate(-1) scale(0.780 1)" font-size="11" text-anchor="middle" dy=".35em" >Fay Dr</text>
<text transform="translate(250 707) rotate(-1) scale(0.780 1)" font-size="11" text-anchor="middle" dy=".35em" >Maple Ave</text>
<text transform="translate(355.5 720.8) rotate(-1) scale(0.780 1)" font-size="11" text-anchor="middle" dy=".35em" >Lincoln Ave</text>
<text transform="translate(359.2 749.5) scale(0.780 1)" font-size="11" text-anchor="middle" dy=".35em" >Savilla Ave</text>
<text transform="translate(243.8 762.5) rotate(-1) scale(0.780 1)" font-size="11" text-anchor="middle" dy=".35em" >Park Ave</text>
<text transform="translate(191.2 795) rotate(-25) scale(0.780 1)" font-size="11" text-anchor="middle" dy=".35em" >Waldron Cir</text>
<text transform="translate(264.5 793.8) rotate(-1) scale(0.780 1)" font-size="11" text-anchor="middle" dy=".35em" >Home Ave</text>
<text transform="translate(466.8 776.8) rotate(-1) scale(0.780 1)" font-size="11" text-anchor="middle" dy=".35em" >Home Ave</text>
<text transform="translate(418.8 709.5) rotate(88) scale(0.780 1)" font-size="11" text-anchor="middle" dy=".35em" >Fox Ave</text>
<text transform="translate(460 602) rotate(-1) scale(0.780 1)" font-size="11" text-anchor="middle" dy=".35em" >W Creighton Ave</text>
<text transform="translate(468.8 637) rotate(-1) scale(0.780 1)" font-size="11" text-anchor="middle" dy=".35em" >Pierce Ave</text>
<text transform="translate(315 805.8) scale(0.780 1)" font-size="11" text-anchor="middle" dy=".35em" >Cottage</text>
<text transform="translate(315.8 819.5) scale(0.780 1)" font-size="11" text-anchor="middle" dy=".35em" >Ave</text>
<text transform="translate(415 805.8) scale(0.780 1)" font-size="11" text-anchor="middle" dy=".35em" >Cottage Ave</text>
<text transform="translate(57.5 713.8) scale(0.780 1)" font-size="11" text-anchor="middle" dy=".35em" >ve</text>
<text transform="translate(391.2 634.5) rotate(-1) scale(0.780 1)" font-size="9.5" text-anchor="middle" dy=".35em" >Belle Ave</text>
<text transform="translate(279.2 677.5) rotate(86) scale(0.780 1)" font-size="8.5" text-anchor="middle" dy=".35em" >Eva St</text>
<text transform="translate(148 767) rotate(82) scale(0.780 1)" font-size="8.5" text-anchor="middle" dy=".35em" >Saint Marys Pkwy</text>
<text transform="translate(477.5 700) rotate(58) scale(0.780 1)" font-size="9" text-anchor="middle" dy=".35em" >Beechwood</text>
<text transform="translate(463.8 712) rotate(70) scale(0.780 1)" font-size="9" text-anchor="middle" dy=".35em" >Cir</text>
<text transform="translate(540.8 672.5) rotate(88) scale(0.780 1)" font-size="11" text-anchor="middle" dy=".35em" >Fairfield View Pl</text>
<text transform="translate(594.5 712.5) rotate(-1) scale(0.780 1)" font-size="11" text-anchor="middle" dy=".35em" >W Woodland Ave</text>
<text transform="translate(625 747.5) rotate(-1) scale(0.780 1)" font-size="11" text-anchor="middle" dy=".35em" >W Leith</text>
<text transform="translate(625 760.8) scale(0.780 1)" font-size="11" text-anchor="middle" dy=".35em" >St</text>
<text transform="translate(692.5 628.2) rotate(-1) scale(0.780 1)" font-size="11" text-anchor="middle" dy=".35em" >E Taber</text>
<text transform="translate(691.8 641.8) scale(0.780 1)" font-size="11" text-anchor="middle" dy=".35em" >St</text>
<text transform="translate(702.5 738.2) rotate(-2) scale(0.780 1)" font-size="11" text-anchor="middle" dy=".35em" >E Leith St</text>
<text transform="translate(522.5 740) rotate(-1) scale(0.780 1)" font-size="11" text-anchor="middle" dy=".35em" >Rose Ln</text>
<text transform="translate(586.8 781.2) rotate(-70) scale(0.780 1)" font-size="11" text-anchor="middle" dy=".35em" >Shawnee Dr</text>
<text transform="translate(627 781.2) rotate(-1) scale(0.780 1)" font-size="11" text-anchor="middle" dy=".35em" >Killea Ave</text>
<text transform="translate(694.5 765) rotate(-88) scale(0.780 1)" font-size="11" text-anchor="middle" dy=".35em" >James</text>
<text transform="translate(707 760.5) rotate(-88) scale(0.780 1)" font-size="11" text-anchor="middle" dy=".35em" >St</text>
<text transform="translate(535.8 803.8) rotate(-1) scale(0.780 1)" font-size="11" text-anchor="middle" dy=".35em" >Downing Ave</text>
<text transform="translate(585 677.5) scale(0.780 1)" font-size="11" text-anchor="middle" dy=".35em" >St</text>
<text transform="translate(572.5 632) rotate(-1) scale(0.780 1)" font-size="9.5" text-anchor="middle" dy=".35em" >W Taber</text>
<text transform="translate(573.2 645) scale(0.780 1)" font-size="9.5" text-anchor="middle" dy=".35em" >St</text>
<text transform="translate(600.8 626.2) rotate(86) scale(0.780 1)" font-size="8.5" text-anchor="middle" dy=".35em" >Webster St</text>
<text transform="translate(585 664.2) rotate(-1) scale(0.780 1)" font-size="9.5" text-anchor="middle" dy=".35em" >W Suttenfield</text>
<text transform="translate(587.5 730) rotate(-1) scale(0.780 1)" font-size="8.5" text-anchor="middle" dy=".35em" >W Pontiac St</text>
<text transform="translate(553 755.8) rotate(-88) scale(0.780 1)" font-size="8.5" text-anchor="middle" dy=".35em" >Hoagland Ave</text>
<text transform="translate(116.2 825) rotate(-1) scale(0.780 1)" font-size="11" text-anchor="middle" dy=".35em" >Gruber Ave</text>
<text transform="translate(225 876.8) rotate(-65) scale(0.780 1)" font-size="11" text-anchor="middle" dy=".35em" >Dinnen</text>
<text transform="translate(237.5 881.2) rotate(-65) scale(0.780 1)" font-size="11" text-anchor="middle" dy=".35em" >Ave</text>
<text transform="translate(289.2 878.8) rotate(-1) scale(0.780 1)" font-size="11" text-anchor="middle" dy=".35em" >Kinnaird Ave</text>
<text transform="translate(302.5 897.5) rotate(-1) scale(0.780 1)" font-size="11" text-anchor="middle" dy=".35em" >W Packard Ave</text>
<text transform="translate(183.2 918.8) rotate(80) scale(0.780 1)" font-size="11" text-anchor="middle" dy=".35em" >Vesey Ave</text>
<text transform="translate(228 932.5) rotate(-71) scale(0.780 1)" font-size="11" text-anchor="middle" dy=".35em" >Broadway St</text>
<text transform="translate(98.8 935) rotate(-1) scale(0.780 1)" font-size="11" text-anchor="middle" dy=".35em" >Kinsmoor Ave</text>
<text transform="translate(285 930) rotate(-1) scale(0.780 1)" font-size="11" text-anchor="middle" dy=".35em" >Kinsmoor Ave</text>
<text transform="translate(140.8 960.8) rotate(85) scale(0.780 1)" font-size="11" text-anchor="middle" dy=".35em" >Ozark Ave</text>
<text transform="translate(280.8 963.2) rotate(-1) scale(0.780 1)" font-size="11" text-anchor="middle" dy=".35em" >Nuttman Ave</text>
<text transform="translate(327.5 856.2) rotate(-88) scale(0.780 1)" font-size="11" text-anchor="middle" dy=".35em" >Beaver</text>
<text transform="translate(340.8 855.5) rotate(-88) scale(0.780 1)" font-size="11" text-anchor="middle" dy=".35em" >Ave</text>
<text transform="translate(424.2 836.8) rotate(-1) scale(0.780 1)" font-size="11" text-anchor="middle" dy=".35em" >W Wildwood</text>
<text transform="translate(424.2 850.5) scale(0.780 1)" font-size="11" text-anchor="middle" dy=".35em" >Ave</text>
<text transform="translate(481.2 864.5) rotate(-1) scale(0.780 1)" font-size="11" text-anchor="middle" dy=".35em" >Kinnaird Ave</text>
<text transform="translate(481.2 922.5) rotate(-1) scale(0.780 1)" font-size="11" text-anchor="middle" dy=".35em" >Kinsmoor Ave</text>
<text transform="translate(426.2 952) rotate(-2) scale(0.780 1)" font-size="11" text-anchor="middle" dy=".35em" >Nuttman Ave</text>
<text transform="translate(373.8 977.5) rotate(-1) scale(0.780 1)" font-size="11" text-anchor="middle" dy=".35em" >Dayton Ave</text>
<text transform="translate(310.8 993.8) rotate(-1) scale(0.780 1)" font-size="11" text-anchor="middle" dy=".35em" >W Oakdale Dr</text>
<text transform="translate(206.8 817.5) scale(0.780 1)" font-size="8.5" text-anchor="middle" dy=".35em" >W Wildwood</text>
<text transform="translate(207.5 829.5) scale(0.780 1)" font-size="8.5" text-anchor="middle" dy=".35em" >Ave</text>
<text transform="translate(261.2 823.8) rotate(20) scale(0.780 1)" font-size="9.8" text-anchor="middle" dy=".35em" >W Wildwood</text>
<text transform="translate(260.8 834.5) rotate(15) scale(0.780 1)" font-size="9.5" text-anchor="middle" dy=".35em" >Ave</text>
<text transform="translate(191.2 832) rotate(44)" font-family="Liberation Serif, serif" font-style="italic" font-size="12.5" text-anchor="middle" dy=".33em" style="fill:#3a48e8;stroke:none">St</text>
<text transform="translate(203.5 851.6) rotate(58)" font-family="Liberation Serif, serif" font-style="italic" font-size="12.5" text-anchor="middle" dy=".33em" style="fill:#3a48e8;stroke:none">Marys</text>
<text transform="translate(213.6 872.4) rotate(75)" font-family="Liberation Serif, serif" font-style="italic" font-size="12.5" text-anchor="middle" dy=".33em" style="fill:#3a48e8;stroke:none">Riv</text>
<text transform="translate(524.2 885) rotate(88) scale(0.780 1)" font-size="11" text-anchor="middle" dy=".35em" >Ct</text>
<text transform="translate(541.2 938) rotate(-1) scale(0.780 1)" font-size="11" text-anchor="middle" dy=".35em" >Violet Ct</text>
<text transform="translate(538.8 962) rotate(-1) scale(0.780 1)" font-size="11" text-anchor="middle" dy=".35em" >Arcadia Ct</text>
<text transform="translate(597.5 995.8) scale(0.780 1)" font-size="11" text-anchor="middle" dy=".35em" >W Oakdale</text>
<text transform="translate(598 1009.5) scale(0.780 1)" font-size="11" text-anchor="middle" dy=".35em" >Dr</text>
<text transform="translate(635.8 925.8) rotate(85) scale(0.780 1)" font-size="11" text-anchor="middle" dy=".35em" >Webster St</text>
<text transform="translate(710 866.2) rotate(88) scale(0.780 1)" font-size="11" text-anchor="middle" dy=".35em" >Clinton Ct</text>
<text transform="translate(701.2 813.8) rotate(50) scale(0.780 1)" font-size="11" text-anchor="middle" dy=".35em" >Piqua Ave</text>
<text transform="translate(416.2 1007) rotate(88) scale(0.780 1)" font-size="11" text-anchor="middle" dy=".35em" >Shaw</text>
<text transform="translate(465 1007) rotate(88) scale(0.780 1)" font-size="11" text-anchor="middle" dy=".35em" >S Web</text>
<text transform="translate(493 1011.2) rotate(88) scale(0.780 1)" font-size="11" text-anchor="middle" dy=".35em" >Arc</text>
<text transform="translate(634.5 1011.2) rotate(88) scale(0.780 1)" font-size="11" text-anchor="middle" dy=".35em" >Web</text>
<text transform="translate(684.5 1008) rotate(88) scale(0.780 1)" font-size="11" text-anchor="middle" dy=".35em" >St</text>
<text transform="translate(538 883) rotate(88) scale(0.780 1)" font-size="8.5" text-anchor="middle" dy=".35em" >La Jolla</text>
<text transform="translate(596.2 943.2) rotate(-1) scale(0.780 1)" font-size="9.5" text-anchor="middle" dy=".35em" >W Darrow Ave</text>
<text transform="translate(596.8 962.5) scale(0.780 1)" font-size="9.5" text-anchor="middle" dy=".35em" >Arcadia&#160;&#160; Ct</text>
<text transform="translate(598.2 844.5) rotate(-1) scale(0.780 1)" font-size="8.5" text-anchor="middle" dy=".35em" >W Wildwood Ave</text>
<text transform="translate(715 944.2) rotate(-1) scale(0.780 1)" font-size="8.5" text-anchor="middle" dy=".35em" >E Darrow</text>
<text transform="translate(715 956.2) scale(0.780 1)" font-size="8.5" text-anchor="middle" dy=".35em" >Ave</text>
<text transform="translate(367.5 1016.2) scale(0.780 1)" font-size="8.5" text-anchor="middle" dy=".35em" >Wisley Dr</text>
<text transform="translate(58.5 97) rotate(-78) scale(0.780 1)" font-size="8.5" text-anchor="middle" dy=".35em" >Harr</text>
<text transform="translate(57.5 176) rotate(-88) scale(0.780 1)" font-size="8.5" text-anchor="middle" dy=".35em" >Watkins</text>
<rect x="740" y="88" width="1.300" height="927" fill="#111"/>
</svg>
<div class="abs" style="left:-57px;top:-88px;width:1920px;height:1080px;font-family:'Liberation Serif',serif;color:#000;-webkit-text-stroke:.3px">
<div class="abs" style="left:768px;top:88px;width:1.25px;height:930px;background:#0a0a0a"></div>
<div class="abs" style="left:1373px;top:88px;width:1.25px;height:930px;background:#0a0a0a"></div>
<div class="abs" style="left:1400px;top:88px;width:1.25px;height:930px;background:#0a0a0a"></div>
<div class="abs" style="left:793px;top:101.7px;font-size:15.5px;line-height:18.6px;white-space:nowrap;">Incorporated Place<span style="font-size:62%;position:relative;top:-0.45em;left:2px">3</span></div>
<div class="abs" style="left:793px;top:148.7px;font-size:15.5px;line-height:18.6px;white-space:nowrap;letter-spacing:-.12px">Census Designated Place</div>
<div class="abs" style="left:793px;top:164.7px;font-size:15.5px;line-height:18.6px;white-space:nowrap;">(CDP)<span style="font-size:62%;position:relative;top:-0.45em;left:2px">2</span></div>
<div class="abs" style="left:1100px;top:94.8px;font-size:27.1px;line-height:32.5px;white-space:nowrap;color:#6868c0">Davis 18100</div>
<div class="abs" style="left:1100px;top:158.5px;font-size:17.5px;line-height:21.0px;white-space:nowrap;font-style:italic;color:#6b5a3a">Cochiti 16560</div>
<svg class="abs" style="left:960px;top:88px" width="120" height="105" viewBox="960 88 120 105">
<rect x="971.0" y="96" width="19.5" height="32" fill="#fde4c8"/>
<rect x="990.4" y="96" width="19.5" height="32" fill="#fdfac4"/>
<rect x="1009.8" y="96" width="19.5" height="32" fill="#e6e2f8"/>
<rect x="1029.2" y="96" width="19.5" height="32" fill="#d4f6d0"/>
<rect x="1048.6" y="96" width="19.5" height="32" fill="#fbd8ee"/>
<circle cx="971.0" cy="95.500" r="3.300" fill="#fff" stroke="#222" stroke-width="1"/>
<circle cx="971.0" cy="128.500" r="3.300" fill="#fff" stroke="#222" stroke-width="1"/>
<circle cx="984.8" cy="95.500" r="3.300" fill="#fff" stroke="#222" stroke-width="1"/>
<circle cx="984.8" cy="128.500" r="3.300" fill="#fff" stroke="#222" stroke-width="1"/>
<circle cx="998.5" cy="95.500" r="3.300" fill="#fff" stroke="#222" stroke-width="1"/>
<circle cx="998.5" cy="128.500" r="3.300" fill="#fff" stroke="#222" stroke-width="1"/>
<circle cx="1012.2" cy="95.500" r="3.300" fill="#fff" stroke="#222" stroke-width="1"/>
<circle cx="1012.2" cy="128.500" r="3.300" fill="#fff" stroke="#222" stroke-width="1"/>
<circle cx="1026.0" cy="95.500" r="3.300" fill="#fff" stroke="#222" stroke-width="1"/>
<circle cx="1026.0" cy="128.500" r="3.300" fill="#fff" stroke="#222" stroke-width="1"/>
<circle cx="1039.8" cy="95.500" r="3.300" fill="#fff" stroke="#222" stroke-width="1"/>
<circle cx="1039.8" cy="128.500" r="3.300" fill="#fff" stroke="#222" stroke-width="1"/>
<circle cx="1053.5" cy="95.500" r="3.300" fill="#fff" stroke="#222" stroke-width="1"/>
<circle cx="1053.5" cy="128.500" r="3.300" fill="#fff" stroke="#222" stroke-width="1"/>
<circle cx="1067.2" cy="95.500" r="3.300" fill="#fff" stroke="#222" stroke-width="1"/>
<circle cx="1067.2" cy="128.500" r="3.300" fill="#fff" stroke="#222" stroke-width="1"/>
<circle cx="971" cy="112" r="3.300" fill="#fff" stroke="#222" stroke-width="1"/><circle cx="1067.500" cy="112" r="3.300" fill="#fff" stroke="#222" stroke-width="1"/>
<rect x="971" y="150" width="97" height="34" fill="#e4e4c8"/>
<circle cx="971.0" cy="150" r="1.900" fill="#fff" stroke="#222" stroke-width=".9"/>
<circle cx="971.0" cy="183.500" r="1.900" fill="#fff" stroke="#222" stroke-width=".9"/>
<circle cx="981.9" cy="150" r="1.900" fill="#fff" stroke="#222" stroke-width=".9"/>
<circle cx="981.9" cy="183.500" r="1.900" fill="#fff" stroke="#222" stroke-width=".9"/>
<circle cx="992.8" cy="150" r="1.900" fill="#fff" stroke="#222" stroke-width=".9"/>
<circle cx="992.8" cy="183.500" r="1.900" fill="#fff" stroke="#222" stroke-width=".9"/>
<circle cx="1003.7" cy="150" r="1.900" fill="#fff" stroke="#222" stroke-width=".9"/>
<circle cx="1003.7" cy="183.500" r="1.900" fill="#fff" stroke="#222" stroke-width=".9"/>
<circle cx="1014.6" cy="150" r="1.900" fill="#fff" stroke="#222" stroke-width=".9"/>
<circle cx="1014.6" cy="183.500" r="1.900" fill="#fff" stroke="#222" stroke-width=".9"/>
<circle cx="1025.5" cy="150" r="1.900" fill="#fff" stroke="#222" stroke-width=".9"/>
<circle cx="1025.5" cy="183.500" r="1.900" fill="#fff" stroke="#222" stroke-width=".9"/>
<circle cx="1036.4" cy="150" r="1.900" fill="#fff" stroke="#222" stroke-width=".9"/>
<circle cx="1036.4" cy="183.500" r="1.900" fill="#fff" stroke="#222" stroke-width=".9"/>
<circle cx="1047.3" cy="150" r="1.900" fill="#fff" stroke="#222" stroke-width=".9"/>
<circle cx="1047.3" cy="183.500" r="1.900" fill="#fff" stroke="#222" stroke-width=".9"/>
<circle cx="1058.2" cy="150" r="1.900" fill="#fff" stroke="#222" stroke-width=".9"/>
<circle cx="1058.2" cy="183.500" r="1.900" fill="#fff" stroke="#222" stroke-width=".9"/>
<circle cx="1067.8" cy="150" r="1.900" fill="#fff" stroke="#222" stroke-width=".9"/>
<circle cx="1067.8" cy="183.500" r="1.900" fill="#fff" stroke="#222" stroke-width=".9"/>
<circle cx="971" cy="161" r="1.900" fill="#fff" stroke="#222" stroke-width=".9"/><circle cx="1068.500" cy="161" r="1.900" fill="#fff" stroke="#222" stroke-width=".9"/>
<circle cx="971" cy="172" r="1.900" fill="#fff" stroke="#222" stroke-width=".9"/><circle cx="1068.500" cy="172" r="1.900" fill="#fff" stroke="#222" stroke-width=".9"/>
</svg>
<div class="abs" style="left:795px;top:221.0px;font-size:15px;line-height:18.0px;white-space:nowrap;text-decoration:underline;text-underline-offset:2px;text-decoration-thickness:1px;">DESCRIPTION</div>
<div class="abs" style="left:932px;top:221.0px;font-size:15px;line-height:18.0px;white-space:nowrap;text-decoration:underline;text-underline-offset:2px;text-decoration-thickness:1px;letter-spacing:-.6px">SYMBOL</div>
<div class="abs" style="left:1097px;top:221.0px;font-size:15px;line-height:18.0px;white-space:nowrap;text-decoration:underline;text-underline-offset:2px;text-decoration-thickness:1px;">DESCRIPTION</div>
<div class="abs" style="left:1234px;top:221.0px;font-size:15px;line-height:18.0px;white-space:nowrap;text-decoration:underline;text-underline-offset:2px;text-decoration-thickness:1px;letter-spacing:-.6px">SYMBOL</div>
<div class="abs" style="left:796px;top:251.7px;font-size:12.2px;line-height:14.6px;white-space:nowrap;">Interstate</div>
<div class="abs" style="left:796px;top:284.7px;font-size:12.2px;line-height:14.6px;white-space:nowrap;">U.S. Highway</div>
<div class="abs" style="left:796px;top:317.7px;font-size:12.2px;line-height:14.6px;white-space:nowrap;">State Highway</div>
<div class="abs" style="left:796px;top:349.7px;font-size:12.2px;line-height:14.6px;white-space:nowrap;">Other Road</div>
<div class="abs" style="left:796px;top:382.7px;font-size:12.2px;line-height:14.6px;white-space:nowrap;">Cul-de-sac</div>
<div class="abs" style="left:796px;top:415.7px;font-size:12.2px;line-height:14.6px;white-space:nowrap;">Circle</div>
<div class="abs" style="left:796px;top:441.7px;font-size:12.2px;line-height:14.6px;white-space:nowrap;">Geographic Offset</div>
<div class="abs" style="left:796px;top:456.7px;font-size:12.2px;line-height:14.6px;white-space:nowrap;">or Corridor<span style="font-size:62%;position:relative;top:-0.45em;left:2px">4</span></div>
<div class="abs" style="left:796px;top:482.7px;font-size:12.2px;line-height:14.6px;white-space:nowrap;">4WD Trail, Stairway,</div>
<div class="abs" style="left:796px;top:496.7px;font-size:12.2px;line-height:14.6px;white-space:nowrap;">Alley, Walkway, or Ferry</div>
<div class="abs" style="left:796px;top:524.7px;font-size:12.2px;line-height:14.6px;white-space:nowrap;">Railroad</div>
<div class="abs" style="left:796px;top:552.7px;font-size:12.2px;line-height:14.6px;white-space:nowrap;">Pipeline or</div>
<div class="abs" style="left:796px;top:566.7px;font-size:12.2px;line-height:14.6px;white-space:nowrap;">Power Line</div>
<div class="abs" style="left:796px;top:595.7px;font-size:12.2px;line-height:14.6px;white-space:nowrap;">Ridge or Fence</div>
<div class="abs" style="left:796px;top:630.7px;font-size:12.2px;line-height:14.6px;white-space:nowrap;">Property Line or</div>
<div class="abs" style="left:796px;top:644.7px;font-size:12.2px;line-height:14.6px;white-space:nowrap;">Nonvisible Boundary</div>
<div class="abs" style="left:796px;top:679.7px;font-size:12.2px;line-height:14.6px;white-space:nowrap;">Perennial Stream</div>
<div class="abs" style="left:796px;top:714.7px;font-size:12.2px;line-height:14.6px;white-space:nowrap;">Intermittent Stream</div>
<div class="abs" style="left:796px;top:747.7px;font-size:12.2px;line-height:14.6px;white-space:nowrap;">Mountain Peak or Hill</div>
<div class="abs" style="left:1098px;top:260.7px;font-size:12.2px;line-height:14.6px;white-space:nowrap;">Water Body</div>
<div class="abs" style="left:1098px;top:302.7px;font-size:12.2px;line-height:14.6px;white-space:nowrap;">Swamp or Marsh</div>
<div class="abs" style="left:1098px;top:344.7px;font-size:12.2px;line-height:14.6px;white-space:nowrap;">Glacier</div>
<div class="abs" style="left:1098px;top:386.7px;font-size:12.2px;line-height:14.6px;white-space:nowrap;">Airport</div>
<div class="abs" style="left:1098px;top:424.7px;font-size:12.2px;line-height:14.6px;white-space:nowrap;">College or University</div>
<div class="abs" style="left:1098px;top:466.7px;font-size:12.2px;line-height:14.6px;white-space:nowrap;">Military</div>
<div class="abs" style="left:1098px;top:502.7px;font-size:12.2px;line-height:14.6px;white-space:nowrap;">Prison or Juvenile</div>
<div class="abs" style="left:1098px;top:516.7px;font-size:12.2px;line-height:14.6px;white-space:nowrap;">Detention Center</div>
<div class="abs" style="left:1098px;top:549.7px;font-size:12.2px;line-height:14.6px;white-space:nowrap;">Cemetery</div>
<div class="abs" style="left:1098px;top:591.7px;font-size:12.2px;line-height:14.6px;white-space:nowrap;">Golf Course</div>
<div class="abs" style="left:1098px;top:633.7px;font-size:12.2px;line-height:14.6px;white-space:nowrap;">National Park or Forest</div>
<div class="abs" style="left:1098px;top:669.7px;font-size:12.2px;line-height:14.6px;white-space:nowrap;">Other Park</div>
<div class="abs" style="left:1098px;top:716.7px;font-size:12.2px;line-height:14.6px;white-space:nowrap;">Outside Subject Area</div>
<div class="abs" style="left:1098px;top:761.7px;font-size:12.2px;line-height:14.6px;white-space:nowrap;">Inset Area</div>
<svg class="abs" style="left:925px;top:240px" width="130" height="540" viewBox="925 240 130 540" font-family="Liberation Sans, sans-serif">
<line x1="932" y1="259.500" x2="1043" y2="259.500" stroke="#444" stroke-width="3.200"/>
<path d="M954.500 254.500h10v5c0 4-3 6-5 7-2-1-5-3-5-7z" fill="#3a4fd8"/><path d="M954.500 254h10v2.500h-10z" fill="#d02030"/><text x="959.500" y="263.500" font-size="8.500" fill="#fff" text-anchor="middle">3</text>
<line x1="932" y1="292.500" x2="1043" y2="292.500" stroke="#444" stroke-width="3.200"/>
<path d="M954 287h11.500v11H954z" fill="#fff" stroke="#555" stroke-width=".8"/><text x="959.800" y="296.300" font-size="9" fill="#111" text-anchor="middle">2</text>
<line x1="932" y1="326" x2="1043" y2="326" stroke="#444" stroke-width="1"/>
<circle cx="959.800" cy="326" r="6.300" fill="#fff" stroke="#444" stroke-width=".9"/><text x="959.800" y="329.300" font-size="9" fill="#111" text-anchor="middle">4</text>
<line x1="932" y1="356.500" x2="1043" y2="356.500" stroke="#777" stroke-width="1"/>
<text x="987.500" y="353.500" font-size="9.800" fill="#222" text-anchor="middle" textLength="36" lengthAdjust="spacingAndGlyphs">Marsh Ln</text>
<line x1="932" y1="390" x2="966" y2="390" stroke="#555" stroke-width="1"/><circle cx="966.500" cy="390" r="2" fill="#333"/>
<line x1="932" y1="423" x2="965" y2="423" stroke="#555" stroke-width="1"/><circle cx="966.500" cy="423" r="1.700" fill="#fff" stroke="#333" stroke-width=".9"/>
<line x1="931.500" y1="457" x2="1043.500" y2="457" stroke="#a80010" stroke-width="3.400" stroke-linecap="round"/>
<line x1="932" y1="496" x2="1043" y2="496" stroke="#555" stroke-width="1" stroke-dasharray="17 10.500"/>
<line x1="932" y1="531.500" x2="1043" y2="531.500" stroke="#555" stroke-width="1"/>
<line x1="932.5" y1="528" x2="932.5" y2="536" stroke="#555" stroke-width="1"/>
<line x1="954.6" y1="528" x2="954.6" y2="536" stroke="#555" stroke-width="1"/>
<line x1="976.7" y1="528" x2="976.7" y2="536" stroke="#555" stroke-width="1"/>
<line x1="998.8" y1="528" x2="998.8" y2="536" stroke="#555" stroke-width="1"/>
<line x1="1020.9" y1="528" x2="1020.9" y2="536" stroke="#555" stroke-width="1"/>
<line x1="1043.0" y1="528" x2="1043.0" y2="536" stroke="#555" stroke-width="1"/>
<text x="987" y="526" font-size="9.800" font-style="italic" fill="#222" text-anchor="middle" textLength="50" lengthAdjust="spacingAndGlyphs">Southern RR</text>
<line x1="932" y1="566.500" x2="1043" y2="566.500" stroke="#999" stroke-width="1"/>
<rect x="930.5" y="564" width="5" height="5" fill="#999"/>
<rect x="960.7" y="564" width="5" height="5" fill="#999"/>
<rect x="990.9" y="564" width="5" height="5" fill="#999"/>
<rect x="1021.1" y="564" width="5" height="5" fill="#999"/>
<line x1="932" y1="602.500" x2="1043" y2="602.500" stroke="#555" stroke-width="1" stroke-dasharray="12 5 2 4"/>
<line x1="932" y1="644" x2="1043" y2="644" stroke="#222" stroke-width="1.200" stroke-dasharray="2 1.500"/>
<line x1="932" y1="686.500" x2="1043" y2="686.500" stroke="#3a4fd8" stroke-width="1.200"/>
<text x="987.500" y="682" font-family="Liberation Serif, serif" font-size="10.500" font-style="italic" fill="#3a4fd8" text-anchor="middle">Tumbling Cr</text>
<line x1="932" y1="722" x2="1043" y2="722" stroke="#3a4fd8" stroke-width="1.200" stroke-dasharray="25 3 2 2 2 3"/>
<text x="987.500" y="718" font-family="Liberation Serif, serif" font-size="10.500" font-style="italic" fill="#3a4fd8" text-anchor="middle">Piney Cr</text>
<path d="M932.500 763l3.500-8 2 3 2.500-6.500 3.500 11.500z" fill="#333"/><text x="942.500" y="752.500" font-size="8" font-style="italic" fill="#222" textLength="33" lengthAdjust="spacingAndGlyphs">Mt. Baker</text>
</svg>
<div class="abs" style="left:1234px;top:254px;width:111px;height:27px;border:1px solid #3a4fd8;background:radial-gradient(circle,#a8b2f2 0.7px,transparent 1.1px) 0 0/14px 14px,#fff;color:#4252e0;font-family:'Liberation Serif',serif;font-size:11.7px;font-style:italic;text-align:center;line-height:25px;white-space:nowrap;overflow:hidden;-webkit-text-stroke:.4px;">Pleasant Lake</div>
<div class="abs" style="left:1234px;top:296px;width:111px;height:26px;border:1px solid transparent;background:radial-gradient(circle,#8a96ea 0.8px,transparent 1.2000000000000002px) 0 0/9px 9px,#fff;color:#9a5238;font-family:'Liberation Serif',serif;font-size:11.7px;font-style:italic;text-align:center;line-height:24px;white-space:nowrap;overflow:hidden;-webkit-text-stroke:.4px;">Okefenokee Swamp</div>
<svg class="abs" style="left:1233px;top:295px" width="113" height="28" viewBox="0 0 113 28"><rect x="1.500" y="1.500" width="110" height="25" fill="none" stroke="#3a4fd8" stroke-width="1.100" stroke-dasharray="30 3 5 3"/></svg>
<div class="abs" style="left:1234px;top:338px;width:111px;height:26px;border:1px solid transparent;background:radial-gradient(circle,#e4d4b4 0.8px,transparent 1.2000000000000002px) 0 0/10px 10px,#fff;color:#9a5238;font-family:'Liberation Serif',serif;font-size:11.7px;font-style:italic;text-align:center;line-height:24px;white-space:nowrap;overflow:hidden;-webkit-text-stroke:.4px;">Bering Glacier</div>
<svg class="abs" style="left:1233px;top:337px" width="113" height="28" viewBox="0 0 113 28"><rect x="1.500" y="1.500" width="110" height="25" fill="none" stroke="#3a4fd8" stroke-width="1.100" stroke-dasharray="30 3 5 3"/></svg>
<div class="abs" style="left:1264px;top:380px;width:81px;height:26px;border:1px solid #f47a10;background:radial-gradient(circle,#fbd24a 0.9px,transparent 1.3px) 0 0/9px 9px,#fff;color:#f47a10;font-family:'Liberation Sans',sans-serif;font-size:11.7px;text-align:center;line-height:24px;white-space:nowrap;overflow:hidden;letter-spacing:-0.3px;">Oxnard Airport</div>
<svg class="abs" style="left:1234px;top:378px" width="30" height="30" viewBox="0 0 30 30"><path d="M14 1c1.200 0 1.800 1.200 1.800 3v7l11 6.500v2.500l-11-3.500v6l3 2.500v2l-4.800-1.500-4.800 1.500v-2l3-2.500v-6l-11 3.500v-2.500l11-6.500V4c0-1.800.6-3 1.800-3z" fill="#f8700a"/></svg>
<div class="abs" style="left:1234px;top:418px;width:111px;height:26px;border:1px solid #d85a6a;background:radial-gradient(circle,#f6c4cc 0.9px,transparent 1.3px) 0 0/9px 9px,#fff;color:#f04a62;font-family:'Liberation Sans',sans-serif;font-size:11.7px;text-align:center;line-height:24px;white-space:nowrap;overflow:hidden;">Coll/Univ</div>
<div class="abs" style="left:1234px;top:460px;width:111px;height:26px;border:1px solid #6a78c8;background:radial-gradient(circle,#9aa6e0 1.0px,transparent 1.4px) 0 0/11px 11px,#fff;color:#6a78c8;font-family:'Liberation Sans',sans-serif;font-size:15.5px;text-align:center;line-height:24px;white-space:nowrap;overflow:hidden;-webkit-text-stroke:0;padding-bottom:4px;line-height:21px;">Fort Belvoir</div>
<div class="abs" style="left:1234px;top:502px;width:111px;height:27px;border:1px solid #b0108a;background:radial-gradient(circle,#f0b8ea 0.9px,transparent 1.3px) 0 0/9px 9px,#fff;color:#b81af0;font-family:'Liberation Sans',sans-serif;font-size:10.6px;text-align:center;line-height:25px;white-space:nowrap;overflow:hidden;letter-spacing:.2px;">P/JDC</div>
<div class="abs" style="left:1234px;top:544px;width:111px;height:26px;border:1px solid #2a8a2a;background:radial-gradient(circle,#8ad040 0.7px,transparent 1.1px) 0 0/8px 8px,#fff;color:#2a8a30;font-family:'Liberation Sans',sans-serif;font-size:11.8px;text-align:center;line-height:24px;white-space:nowrap;overflow:hidden;">Powell Cmtry</div>
<div class="abs" style="left:1234px;top:585px;width:111px;height:26px;border:1px solid #2a8a2a;background:radial-gradient(circle,#8ad040 0.7px,transparent 1.1px) 0 0/9px 9px,#fff;color:#2a8a30;font-family:'Liberation Sans',sans-serif;font-size:11.4px;text-align:center;line-height:24px;white-space:nowrap;overflow:hidden;">Pinehurst GlfCrs</div>
<div class="abs" style="left:1234px;top:627px;width:111px;height:26px;border:1px solid #2a8a2a;background:radial-gradient(circle,#8ad040 0.7px,transparent 1.1px) 0 0/16px 16px,#fff;color:#2a8a30;font-family:'Liberation Sans',sans-serif;font-size:11.5px;text-align:center;line-height:24px;white-space:nowrap;overflow:hidden;">Yosemite NP</div>
<div class="abs" style="left:1234px;top:669px;width:111px;height:26px;border:1px solid #2a8a2a;background:radial-gradient(circle,#8ad040 0.7px,transparent 1.1px) 0 0/12px 12px,#fff;color:#2a8a30;font-family:'Liberation Sans',sans-serif;font-size:11.0px;text-align:center;line-height:24px;white-space:nowrap;overflow:hidden;">St Francis Park</div>
<div class="abs" style="left:1234px;top:708px;width:111px;height:27px;background:radial-gradient(circle,#c4c4c4 .7px,transparent 1.1px) 0 0/3px 3px,#f6f6f6"></div>
<div class="abs" style="left:1233px;top:754px;width:114px;height:29px;border:4px solid #14d014;background:radial-gradient(circle,#999 .7px,transparent 1.1px) 0 0/3px 3px,#efefef;color:#2a9a30;font-family:'Liberation Sans',sans-serif;font-size:15px;text-align:center;line-height:24px;white-space:nowrap;overflow:hidden;">A1</div>
<div class="abs" style="left:795px;top:810.6px;font-size:15.6px;line-height:18.7px;white-space:nowrap;letter-spacing:0px">Where state, county, and/or MCD/CCD boundaries coincide, the map shows the</div>
<div class="abs" style="left:795px;top:826.6px;font-size:15.6px;line-height:18.7px;white-space:nowrap;letter-spacing:-0.04px">boundary symbol for only the highest-ranking of these boundaries.&nbsp; Where American</div>
<div class="abs" style="left:795px;top:843.6px;font-size:15.6px;line-height:18.7px;white-space:nowrap;letter-spacing:0px">Indian reservation and American Indian tribal subdivision boundaries coincide, the map</div>
<div class="abs" style="left:795px;top:859.6px;font-size:15.6px;line-height:18.7px;white-space:nowrap;letter-spacing:0px">shows only the American Indian reservation boundaries.</div>
<div class="abs" style="left:795px;top:883.6px;font-size:15.6px;line-height:18.7px;white-space:nowrap;letter-spacing:-0.125px">Entity names are followed by either their FIPS code or census code; parentheses indicate</div>
<div class="abs" style="left:795px;top:900.6px;font-size:15.6px;line-height:18.7px;white-space:nowrap;letter-spacing:0px">a census code.</div>
<div class="abs" style="left:795px;top:925.6px;font-size:15.6px;line-height:18.7px;white-space:nowrap;">1</div>
<div class="abs" style="left:808px;top:925.6px;font-size:15.6px;line-height:18.7px;white-space:nowrap;letter-spacing:-.165px">'MCD*' indicates a false MCD.&nbsp; These are for Census Bureau use only.</div>
<div class="abs" style="left:795px;top:948.6px;font-size:15.6px;line-height:18.7px;white-space:nowrap;">2</div>
<div class="abs" style="left:808px;top:948.6px;font-size:15.6px;line-height:18.7px;white-space:nowrap;">The CCD and CDP boundaries represent statistical entities only and are not updated</div>
<div class="abs" style="left:808px;top:964.6px;font-size:15.6px;line-height:18.7px;white-space:nowrap;">through the BAS.</div>
<div class="abs" style="left:795px;top:986.6px;font-size:15.6px;line-height:18.7px;white-space:nowrap;">3</div>
<div class="abs" style="left:808px;top:986.6px;font-size:15.6px;line-height:18.7px;white-space:nowrap;">Incorporated place name color corresponds to the incorporated place fill color.</div>
<div class="abs" style="left:795px;top:1009.6px;font-size:15.6px;line-height:18.7px;white-space:nowrap;">4</div>
<div class="abs" style="left:808px;top:1009.6px;font-size:15.6px;line-height:18.7px;white-space:nowrap;">Geographic offsets and corridors are displayed directly on the mapped. Geographic</div>
</div>
<div class="abs" style="left:0;top:0;width:1402px;height:4px;background:linear-gradient(rgba(0,0,0,.16),rgba(0,0,0,0))"></div></div>
<div id="vbar">
 <div class="abs" style="left:5px;top:6px;width:0;height:0;border:4px solid transparent;border-bottom:5px solid #444;border-top:0"></div>
 <div class="abs" style="left:1px;top:180px;width:14px;height:179px;border:1px solid #9a9a9a;border-radius:2px;background:linear-gradient(90deg,#f4f4f4,#e2e2e2 50%,#cfcfcf)"><div class="abs" style="left:3px;top:85px;width:7px;height:7px;border-top:1px solid #555;border-bottom:1px solid #555"><div style="margin-top:2px;height:1px;background:#555"></div></div></div>
 <div class="abs" style="left:5px;top:917px;width:0;height:0;border:4px solid transparent;border-top:5px solid #444;border-bottom:0"></div>
</div>
<div id="hbar">
 <div class="abs" style="left:0;top:0;width:118px;height:17px;background:#e2e2e2"></div>
 <div class="abs" style="left:20px;top:2px;font-size:11px;color:#000;white-space:nowrap">36.03 x 32.00 in</div>
 <div class="abs" style="left:123px;top:4px;width:0;height:0;border:4px solid transparent;border-right:5px solid #333;border-left:0"></div>
 <div class="abs" style="left:946px;top:2px;width:442px;height:14px;border:1px solid #9a9a9a;border-radius:2px;background:linear-gradient(#f6f6f6,#e4e4e4 50%,#d0d0d0)"><div class="abs" style="left:217px;top:3px;width:7px;height:6px;border-left:1px solid #555;border-right:1px solid #555"><div style="margin-left:2px;width:1px;height:6px;background:#555"></div></div></div>
 <div class="abs" style="left:1395px;top:4px;width:0;height:0;border:4px solid transparent;border-left:5px solid #333;border-right:0"></div>
</div>
<div id="panel">
 <div class="abs" style="left:0;top:0;width:229px;height:19px;background:linear-gradient(#eef6fd,#e0eefa);border-bottom:1px solid #777"></div>
 <div class="abs" style="left:176px;top:3px;font-size:11.5px;color:#0000e0">Sign In</div>
 <div class="ph" style="top:19px"><i></i>Export PDF</div>
 <div class="ph" style="top:46px"><i class="dn"></i>Create PDF</div>
 <div class="abs" style="left:0;top:74px;width:229px;height:215px;background:#f0f0f0;border-bottom:1px solid #8c8c8c"></div>
 <div class="abs" style="left:10px;top:86px;font-size:11.6px;font-weight:bold;color:#333">Adobe Create PDF</div>
 <svg class="abs" style="left:200px;top:84px" width="18" height="18" viewBox="0 0 18 18"><circle cx="7" cy="7" r="6" fill="#cfe0f4" stroke="#5a84c4" stroke-width="1"/><path d="M1 7h12M7 1v12M3 3c2 2 6 2 8 0M3 11c2-2 6-2 8 0" stroke="#5a84c4" stroke-width=".7" fill="none"/><rect x="8" y="8" width="8" height="8" fill="#fff" stroke="#555" stroke-width=".8"/><rect x="7" y="7" width="5" height="3" fill="#d0202a"/></svg>
 <div class="abs" style="left:10px;top:105px;width:215px;font-size:11.3px;line-height:13.5px;color:#444">Convert Word, Excel, PowerPoint, and<br>image files to PDF with a paid<br>subscription.</div>
 <div class="abs" style="left:10px;top:157px;font-size:11.2px;color:#1a1a9c;white-space:nowrap">Select File to Convert to PDF:</div>
 <div class="abs" style="left:10px;top:175px;width:210px;height:25px;background:#fff;border:1px solid #8a8a8a"></div>
 <div class="abs" style="left:60px;top:227px;width:111px;height:26px;border:1px solid #707070;background:linear-gradient(#f6f6f6,#e6e6e6);font-size:11.5px;color:#222;text-align:center;padding-top:6px">Select File</div>
 <div class="ph" style="top:289px"><i></i>Edit PDF</div>
 <div class="ph" style="top:316px"><i></i>Send Files</div>
 <div class="ph" style="top:343px"><i></i>Store Files</div>
 <div class="abs" style="left:0;top:371px;width:229px;height:573px;background:repeating-linear-gradient(135deg,#dedede 0,#dedede 1.4px,#c5c5c5 1.4px,#c5c5c5 2.8px)"></div>
</div>
<div class="dtxt" style="right:6px;top:991px">Windows 7</div>
<div class="dtxt" style="right:6px;top:1008px">Build 7601</div>
<div class="dtxt" style="right:6px;top:1025px">This copy of Windows is not genuine</div>
<svg class="abs" style="left:1760px;top:110px" width="52" height="52" viewBox="0 0 52 52"><defs><linearGradient id="mon" x1="0" y1="0" x2="1" y2="1"><stop offset="0" stop-color="#7fc4ee"/><stop offset="1" stop-color="#1b6cb8"/></linearGradient></defs><path d="M4 5 46 2v36L4 41z" fill="#c9ccd0"/><path d="M6 7 44 4.500v31L6 38.500z" fill="url(#mon)"/><circle cx="37" cy="11" r="5" fill="#d9dde2"/><circle cx="38" cy="23" r="4" fill="#d6dbe0"/><rect x="33" y="29" width="9" height="6" fill="#e6e8ea"/><path d="M20 40h12l2 6H18z" fill="#444"/><rect x="12" y="45" width="30" height="3" fill="#888"/><rect x="3" y="35" width="13" height="13" fill="#fff" stroke="#999" stroke-width=".6"/><path d="M6 45c0-5 3-6 6-6v-2l3 3.500-3 3.500v-2c-2 0-4 0-6 3z" fill="#2a5fb0"/></svg>
<div class="dtxt" style="left:1726px;width:120px;text-align:center;top:163px">ETV-Audito...</div>
<div class="dtxt" style="left:1726px;width:120px;text-align:center;top:178px">Town Hall (...</div>
<svg class="abs" style="left:1761px;top:526px" width="48" height="48" viewBox="0 0 48 48"><path d="M12 1h22l11 11v35H12z" fill="#fff" stroke="#c8c8c8" stroke-width=".8"/><path d="M34 1v11h11z" fill="#dcdcdc"/><rect x="1" y="5" width="32" height="12" fill="#a81c2a"/><text x="17" y="14.500" font-family="Liberation Sans, sans-serif" font-size="9" font-weight="bold" fill="#fff" text-anchor="middle">PDF</text><path d="M17 41c6-6 9-13 9-17s-4-3-2 2 8 11 13 11-6-3-20 4z" fill="none" stroke="#c4161c" stroke-width="2"/></svg>
<div class="dtxt" style="left:1726px;width:120px;text-align:center;top:579px;font-size:11.1px">1. 2010 LUCA</div>
<div class="dtxt" style="left:1726px;width:120px;text-align:center;top:594px;font-size:11.2px">Local User ...</div>
<div id="taskbar">
 <div class="abs" style="left:1400px;top:2px;width:520px;height:39px;background:linear-gradient(90deg,rgba(122,138,162,0) 0,rgba(122,138,162,.8) 170px,rgba(122,138,162,.85) 100%)"></div>
 <div class="abs" style="left:0;top:2px;width:75px;height:39px;background:linear-gradient(90deg,rgba(110,132,165,.75) 0,rgba(110,132,165,.6) 45px,rgba(110,132,165,0) 100%)"></div>
 <svg class="abs" style="left:7px;top:1px" width="40" height="40" viewBox="0 0 40 40"><defs><radialGradient id="orb" cx=".5" cy=".35" r=".7"><stop offset="0" stop-color="#8fd0f6"/><stop offset=".55" stop-color="#2f7fc4"/><stop offset="1" stop-color="#123f78"/></radialGradient></defs><circle cx="20" cy="20" r="18" fill="url(#orb)" stroke="#1d4f86" stroke-width="1"/><path d="M11 13c3-2 5-2 8-.5l-1.600 7c-3-1.500-5-1.500-8 .5z" fill="#f0642a"/><path d="M21 12.500c3 1.500 5 1.500 8-.5l-1.600 7.500c-3 2-5 2-8 .5z" fill="#8cc63f"/><path d="M9 21.500c3-2 5-2 8-.5l-1.600 7c-3-1.500-5-1.500-8 .5z" fill="#3aa0e8"/><path d="M19 21.500c3 1.500 5 1.500 8-.5l-1.600 7.500c-3 2-5 2-8 .5z" fill="#fdb813"/></svg>
 <div class="tbtn" style="left:60px"></div>
 <div class="tbtn" style="left:122px"></div>
 <div class="tbtn" style="left:307px"></div>
 <div class="tbtn" style="left:369px"></div>
 <div class="tbtn" style="left:431px"></div>
 <div class="tbtn" style="left:493px;background:linear-gradient(135deg,#f4f8fc,#d3e0ef 45%,#c4d4e8)"></div>
 <!-- explorer -->
 <svg class="abs" style="left:70px;top:5px" width="38" height="34" viewBox="0 0 38 34"><path d="M3 6h10l2 2h18v20H3z" fill="#f3d98a" stroke="#d9b860" stroke-width=".8"/><rect x="7" y="3" width="4" height="2" fill="#2fae3f"/><rect x="15" y="5" width="4" height="2" fill="#d8402f"/><rect x="23" y="7" width="4" height="2" fill="#3a8fe0"/><path d="M3 12h30v16H3z" fill="#f7e4a0" stroke="#d9b860" stroke-width=".8"/><path d="M7 30v-8c0-2 1-3 3-3h17c2 0 3 1 3 3v8h-5v-6H12v6z" fill="#7fc6ec" stroke="#4b9fd0" stroke-width=".8"/></svg>
 <!-- ie -->
 <svg class="abs" style="left:133px;top:3px" width="38" height="36" viewBox="0 0 38 36"><circle cx="19" cy="19" r="12" fill="#4fb4ea"/><circle cx="19" cy="19" r="6.500" fill="#b4c9e0"/><rect x="12" y="17" width="20" height="4" fill="#4fb4ea"/><rect x="24" y="21" width="9" height="4" fill="#b4c9e0"/><ellipse cx="19" cy="18" rx="17" ry="7" fill="none" stroke="#f3b71a" stroke-width="2.400" transform="rotate(-35 19 18)"/></svg>
 <!-- outlook -->
 <svg class="abs" style="left:196px;top:4px" width="34" height="34" viewBox="0 0 34 34"><circle cx="17" cy="17" r="16" fill="#0a6bbd"/><path d="M7 10l11-2v18L7 24z" fill="#fff"/><rect x="18" y="11" width="9" height="11" fill="#fff"/><circle cx="12.500" cy="17" r="2.600" fill="none" stroke="#0a6bbd" stroke-width="1.600"/><path d="M19 13l4 3 4-3" stroke="#0a6bbd" stroke-width="1.200" fill="none"/></svg>
 <!-- chat -->
 <svg class="abs" style="left:259px;top:4px" width="34" height="34" viewBox="0 0 34 34"><circle cx="17" cy="17" r="15.500" fill="#fbc54a" stroke="#e59a2a" stroke-width="1.200"/><path d="M7 14c0-4 4-7 10-7s10 3 10 7-4 7-10 7c-1 0-2 0-3-.3L23 26l-5-5c-6 0-11-3-11-7z" fill="#f47c20"/></svg>
 <!-- wmp -->
 <svg class="abs" style="left:320px;top:6px" width="34" height="32" viewBox="0 0 34 32"><rect x="6" y="3" width="22" height="24" fill="#9cc7ea" stroke="#6da6d6" stroke-width=".8"/><rect x="3" y="2" width="22" height="24" fill="#b9d9f1" stroke="#6da6d6" stroke-width=".8"/><circle cx="14" cy="14" r="9" fill="#f47c20"/><path d="M11 9l8 5-8 5z" fill="#fff"/></svg>
 <!-- word -->
 <svg class="abs" style="left:381px;top:3px" width="36" height="36" viewBox="0 0 36 36"><path d="M3 7c0-3 2-5 5-5h20v30H3z" fill="#fff" stroke="#2a5caa" stroke-width="1.400"/><rect x="4" y="20" width="23" height="11" fill="#9cc0e8"/><text x="15" y="24" font-family="Liberation Sans, sans-serif" font-weight="bold" font-size="24" fill="#1f4e9c" text-anchor="middle">W</text><path d="M17 22l14-4 2 10-14 4z" fill="#fff" stroke="#9ab" stroke-width=".6"/></svg>
 <!-- ppt -->
 <svg class="abs" style="left:443px;top:3px" width="36" height="36" viewBox="0 0 36 36"><path d="M3 7c0-3 2-5 5-5h20v30H3z" fill="#fbe3d4" stroke="#d9531e" stroke-width="1.400"/><text x="13" y="23" font-family="Liberation Sans, sans-serif" font-weight="bold" font-size="23" fill="#d9531e" text-anchor="middle">P</text><path d="M12 20l18-5 3 12-18 5z" fill="#fff" stroke="#d9a" stroke-width=".6"/><circle cx="24" cy="21" r="3.500" fill="#ef7a52"/></svg>
 <!-- adobe -->
 <svg class="abs" style="left:509px;top:5px" width="28" height="27" viewBox="0 0 28 27"><defs><linearGradient id="adb" x1="0" y1="0" x2="0" y2="1"><stop offset="0" stop-color="#e01010"/><stop offset="1" stop-color="#7d0008"/></linearGradient></defs><rect width="28" height="27" fill="url(#adb)"/><path d="M6 22c5-4 8-10 8-14s-3-3-2 1 6 9 10 9-5-3-16 4z" fill="none" stroke="#fff" stroke-width="1.300"/></svg>
 <!-- tray -->
<svg class="abs" style="left:1569.7px;top:12.5px" width="18" height="18" viewBox="0 0 18 18"><rect x="1" y="1" width="16" height="16" rx="3" fill="#151515" stroke="#3a3a3a" stroke-width=".8"/><circle cx="6" cy="9" r="1.200" fill="#fff"/><path d="M8 6a4 4 0 0 1 0 6M10.500 4a7 7 0 0 1 0 10" fill="none" stroke="#fff" stroke-width="1.400"/></svg>
<svg class="abs" style="left:1593.7px;top:12.5px" width="18" height="18" viewBox="0 0 18 18"><rect x="1" y="1" width="16" height="16" rx="3" fill="#3fb54a" stroke="#2a8a34" stroke-width=".8"/><path d="M8 3v10M3 8h10M4.500 4.500l7 7M11.500 4.500l-7 7" stroke="#fff" stroke-width="1.300"/><circle cx="13" cy="13" r="3" fill="#f4f4f4" stroke="#999" stroke-width=".5"/></svg>
<svg class="abs" style="left:1617.6px;top:12.5px" width="18" height="18" viewBox="0 0 18 18"><circle cx="9" cy="9" r="7.500" fill="#f79a1c" stroke="#e07c10" stroke-width=".6"/><path d="M9 4.500l4 4.500h-2.500v4h-3V9H5z" fill="#fff4b0"/></svg>
<svg class="abs" style="left:1642.0px;top:12.5px" width="18" height="18" viewBox="0 0 18 18"><rect x="1.500" y="1.500" width="15" height="15" fill="#fbe8ea" stroke="#c8202c" stroke-width="1.600"/><path d="M5 5h5l3 3v6H5z" fill="#fff" stroke="#c8202c" stroke-width="1"/><rect x="6.500" y="9" width="5" height="4" fill="#c8202c"/></svg>
<svg class="abs" style="left:1666.0px;top:12.5px" width="18" height="18" viewBox="0 0 18 18"><path d="M2 2.500c3 1 4.500-.5 7-1 2.500.5 4 2 7 1 .5 7-2 12-7 14.500C4 14.500 1.500 9.500 2 2.500z" fill="#b8202c" stroke="#e0e0e0" stroke-width="1.200"/><path d="M5.500 12V6l3.500 3.500L12.500 6v6" fill="none" stroke="#fff" stroke-width="1.500"/></svg>
<svg class="abs" style="left:1690.7px;top:12.5px" width="18" height="18" viewBox="0 0 18 18"><path d="M3 3l2-1 9 10-3 3z" fill="#9aa4ae" stroke="#6a747e" stroke-width=".6"/><path d="M10 12l3-3 3 3.500-3 3z" fill="#2a3ad8"/><path d="M2 1l3 3" stroke="#777" stroke-width="1"/></svg>
<svg class="abs" style="left:1713.7px;top:12.5px" width="18" height="18" viewBox="0 0 18 18"><path d="M3 4c5-3 11 3 12 9-4 2-11-3-12-9z" fill="#1a1a1a"/><path d="M8 10l-4 6h7z" fill="#2a2a2a"/><circle cx="5" cy="13" r="1.600" fill="#ddd"/></svg>
<svg class="abs" style="left:1737.6px;top:12.5px" width="18" height="18" viewBox="0 0 18 18"><path d="M5.500 1h7L17 5.500v7L12.500 17h-7L1 12.500v-7z" fill="#1430c8"/><path d="M1.500 9.500h4l1.500-4 2 8 2-6 1 2h4" fill="none" stroke="#f4e81a" stroke-width="1.200"/><rect x="10" y="11" width="7" height="6" fill="#2aa83a"/><path d="M11.500 14l1.500 1.500 2.500-3" stroke="#fff" stroke-width="1.100" fill="none"/></svg>
<svg class="abs" style="left:1762.0px;top:12.5px" width="18" height="18" viewBox="0 0 18 18"><path d="M3 1.500v15" stroke="#555" stroke-width="1.400"/><path d="M4 2.500c3-1.500 5 1.500 9 0v7c-4 1.500-6-1.500-9 0z" fill="#f4f4f4" stroke="#888" stroke-width=".6"/><circle cx="12.500" cy="12.500" r="4.500" fill="#e0202a" stroke="#fff" stroke-width=".6"/><path d="M10.500 10.500l4 4M14.500 10.500l-4 4" stroke="#fff" stroke-width="1.400"/></svg>
<svg class="abs" style="left:1785.7px;top:12.5px" width="18" height="18" viewBox="0 0 18 18"><rect x="6" y="5" width="11" height="8" fill="#dfe8f0" stroke="#444" stroke-width="1"/><path d="M9 16h5M11.500 13v3" stroke="#444" stroke-width="1.200"/><path d="M3 1.500v4M6 1.500v4M2 5.500h5v3l-1.500 1.500v6" fill="none" stroke="#fff" stroke-width="1.200"/></svg>
<svg class="abs" style="left:1810.0px;top:12.5px" width="18" height="18" viewBox="0 0 18 18"><path d="M2 6.500h3l4-4v13l-4-4H2z" fill="#f2f4f6" stroke="#9aa" stroke-width=".6"/><path d="M11.500 6a4 4 0 0 1 0 6" fill="none" stroke="#dfe6ee" stroke-width="1.200"/></svg>
<div class="abs" style="left:1835px;top:7px;width:70px;text-align:center;color:#f2f6fa;font-size:12px">2:48 PM</div>
<div class="abs" style="left:1835px;top:24px;width:70px;text-align:center;color:#f2f6fa;font-size:12px">10/29/2015</div>
<div class="abs" style="left:1906px;top:1px;width:14px;height:40px;border-left:1px solid #5a6a80;background:linear-gradient(90deg,#a9b6c8,#7f8fa6 60%,#6f7f96);box-shadow:inset 1px 0 0 rgba(255,255,255,.35)"></div>
</div>
</body></html>
